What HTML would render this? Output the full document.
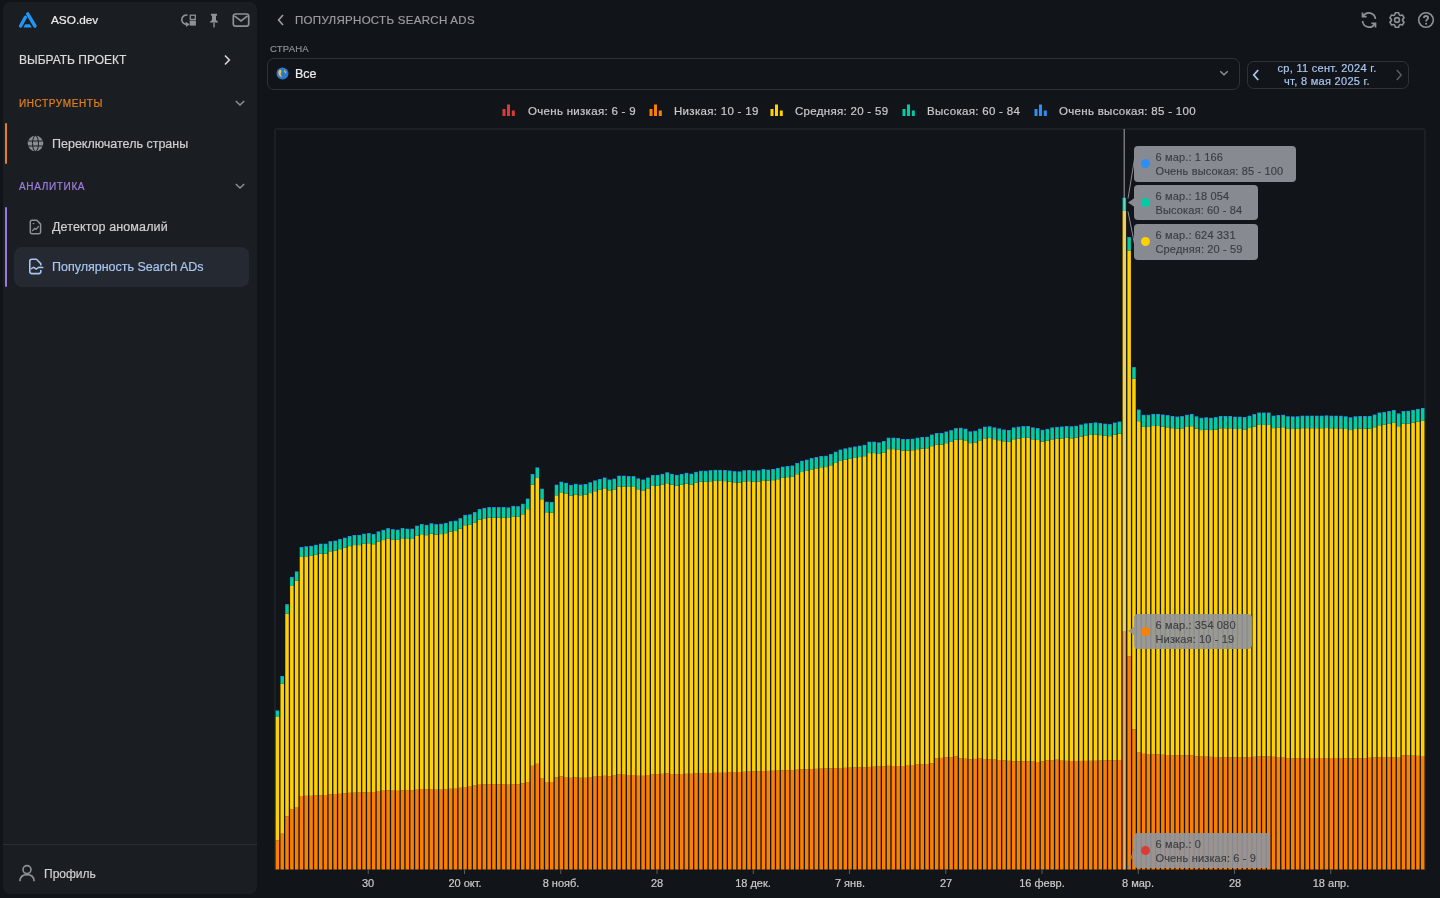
<!DOCTYPE html>
<html lang="ru">
<head>
<meta charset="utf-8">
<style>
*{box-sizing:border-box;margin:0;padding:0}
html,body{width:1440px;height:898px;overflow:hidden;background:#111418;font-family:"Liberation Sans",sans-serif;color:#d6d7d9}
.abs{position:absolute}
#side{position:absolute;left:3px;top:2px;width:254px;height:891.5px;background:#1a1d21;border-radius:7px}
.t{position:absolute;white-space:nowrap;line-height:1;will-change:transform;-webkit-text-stroke:0.2px currentColor}
.accent{position:absolute;left:5px;width:2px;border-radius:1px}
.sel{position:absolute;left:13.5px;top:246.5px;width:235px;height:40px;background:#242932;border-radius:8px}
#chartbox{position:absolute;left:274px;top:128px;width:1152px;height:742px;border:2px solid #1c1f24;border-radius:3px 3px 0 0;border-bottom:none}
.xl{will-change:transform;-webkit-text-stroke:0.2px currentColor;position:absolute;top:877px;width:80px;text-align:center;font-size:11px;color:#c9cacc;line-height:12px}
.tt{will-change:transform;position:absolute;background:rgba(146,149,156,0.92);border-radius:4px}
.tt .dot{position:absolute;left:7px;top:13px;width:9px;height:9px;border-radius:50%}
.tt .l1,.tt .l2{-webkit-text-stroke:0.15px currentColor;position:absolute;left:21.5px;font-size:11px;letter-spacing:0.15px;color:#3b3e44;white-space:nowrap;line-height:12px}
.tt .l1{top:5.4px}
.tt .l2{top:18.5px}
.li{position:absolute;top:104px}
.lt{will-change:transform;-webkit-text-stroke:0.2px currentColor;position:absolute;top:105px;font-size:11.5px;letter-spacing:0.3px;color:#c9cacc;white-space:nowrap;line-height:12px}
</style>
</head>
<body>
<div id="side">
</div>
<!-- logo -->
<svg class="abs" style="left:16px;top:10px" width="24" height="20" viewBox="16 10 24 20">
  <path d="M27.7 13.9 L35.0 26.0" stroke="#2196f3" stroke-width="3.4" stroke-linecap="round"/>
  <path d="M25.4 17.2 L20.6 26.0" stroke="#2196f3" stroke-width="3.4" stroke-linecap="round"/>
  <path d="M23.4 27.6 L25.2 24.2 L29.8 24.2 L31.8 27.6 Z" fill="#2196f3"/>
</svg>
<div class="t" style="left:50.5px;top:15px;font-size:11.8px;color:#eceef0">ASO.dev</div>
<!-- top icons -->
<svg class="abs" style="left:181px;top:12px" width="16" height="16" viewBox="0 0 16 16">
  <path d="M6.5 3.2 A4.6 4.6 0 1 0 6.2 12.2" fill="none" stroke="#8e9197" stroke-width="1.6"/>
  <path d="M4.6 10.6 L7.4 12.4 L5 14.2" fill="none" stroke="#8e9197" stroke-width="1.5"/>
  <rect x="9.3" y="3.2" width="5" height="4.2" fill="none" stroke="#8e9197" stroke-width="1.3"/>
  <rect x="8.7" y="8.6" width="6.2" height="5" fill="#8e9197"/>
</svg>
<svg class="abs" style="left:206px;top:12px" width="16" height="16" viewBox="0 0 16 16">
  <path d="M5 1.8 H11 V3.6 L10 4 V8 L12 9.8 V10.6 H4 V9.8 L6 8 V4 L5 3.6 Z" fill="#8e9197"/>
  <rect x="7.3" y="10.4" width="1.4" height="5" fill="#8e9197"/>
</svg>
<svg class="abs" style="left:232px;top:12px" width="18" height="16" viewBox="0 0 18 16">
  <rect x="1.3" y="2" width="15.4" height="12.2" rx="2.2" fill="none" stroke="#8e9197" stroke-width="1.7"/>
  <path d="M2.4 3.8 L9 9 L15.6 3.8" fill="none" stroke="#8e9197" stroke-width="1.7"/>
</svg>

<div class="t" style="left:18.5px;top:54px;font-size:12px;color:#d9dadc;font-weight:500">ВЫБРАТЬ ПРОЕКТ</div>
<svg class="abs" style="left:222px;top:54px" width="10" height="12" viewBox="0 0 10 12">
  <path d="M3 1.5 L7.3 6 L3 10.5" fill="none" stroke="#d0d1d3" stroke-width="1.7"/>
</svg>

<div class="t" style="left:18.5px;top:99px;font-size:10px;color:#e5821e;font-weight:normal;-webkit-text-stroke:0.2px currentColor;letter-spacing:0.6px">ИНСТРУМЕНТЫ</div>
<svg class="abs" style="left:234px;top:98px" width="12" height="10" viewBox="0 0 12 10">
  <path d="M1.8 3 L6 7 L10.2 3" fill="none" stroke="#8e9197" stroke-width="1.5"/>
</svg>
<div class="accent" style="top:122.5px;height:41px;background:#e5821e"></div>
<svg class="abs" style="left:26.7px;top:134.8px" width="17" height="17" viewBox="0 0 17 17">
  <circle cx="8.5" cy="8.5" r="7.8" fill="#8a8d92"/>
  <g stroke="#1a1d21" stroke-width="1" fill="none">
  <ellipse cx="8.5" cy="8.5" rx="3" ry="7.8"/>
  <line x1="0.7" y1="6" x2="16.3" y2="6"/>
  <line x1="0.7" y1="11" x2="16.3" y2="11"/>
  </g>
</svg>
<div class="t" style="left:52px;top:137.5px;font-size:12.5px;color:#cfd0d3">Переключатель страны</div>

<div class="t" style="left:18.5px;top:182.2px;font-size:10px;color:#a07ee0;font-weight:normal;-webkit-text-stroke:0.2px currentColor;letter-spacing:0.65px">АНАЛИТИКА</div>
<svg class="abs" style="left:234px;top:181px" width="12" height="10" viewBox="0 0 12 10">
  <path d="M1.8 3 L6 7 L10.2 3" fill="none" stroke="#8e9197" stroke-width="1.5"/>
</svg>
<div class="accent" style="top:206.5px;height:80px;background:#9a7ad8"></div>
<svg class="abs" style="left:28px;top:219px" width="15" height="16" viewBox="0 0 15 16">
  <path d="M4 1.3 H8.8 L12.6 5.1 V13 Q12.6 14.7 10.9 14.7 H4 Q2.3 14.7 2.3 13 V3 Q2.3 1.3 4 1.3 Z" fill="none" stroke="#8e9197" stroke-width="1.5" stroke-linejoin="round"/>
  <path d="M4.6 11.6 L6.6 9.4 L8 10.4 L10.4 7.6" fill="none" stroke="#8e9197" stroke-width="1.4" stroke-linecap="round"/>
  <path d="M4.6 4.6 H6.4" stroke="#8e9197" stroke-width="1.1"/>
</svg>
<div class="t" style="left:52px;top:221px;font-size:12.5px;letter-spacing:0.12px;color:#cfd0d3">Детектор аномалий</div>

<div class="sel"></div>
<svg class="abs" style="left:28px;top:258px" width="17" height="17" viewBox="0 0 17 17">
  <path d="M12.8 12 V13.6 Q12.8 15.6 10.8 15.6 H3.8 Q1.8 15.6 1.8 13.6 V3.2 Q1.8 1.2 3.8 1.2 H8.4 L12.8 5.6 V7.6" fill="none" stroke="#a9c6ef" stroke-width="1.6" stroke-linejoin="round"/>
  <path d="M3.4 10.6 L5.6 9.4 L8.2 11 L10.8 9.2 L14.8 9.6" fill="none" stroke="#a9c6ef" stroke-width="1.5" stroke-linecap="round"/>
</svg>
<div class="t" style="left:52px;top:261px;font-size:12.5px;color:#a9c6ef">Популярность Search ADs</div>

<div class="abs" style="left:3px;top:844px;width:254px;height:1px;background:#2b2e35"></div>
<svg class="abs" style="left:18px;top:864px" width="18" height="18" viewBox="0 0 18 18">
  <circle cx="9" cy="5.6" r="4" fill="none" stroke="#8e9197" stroke-width="1.6"/>
  <path d="M1.8 17.2 C2.2 12.6 5 10.6 9 10.6 C13 10.6 15.8 12.6 16.2 17.2" fill="none" stroke="#8e9197" stroke-width="1.6"/>
</svg>
<div class="t" style="left:44px;top:867.8px;font-size:12px;color:#cfd0d2">Профиль</div>

<!-- header -->
<svg class="abs" style="left:275px;top:13px" width="12" height="14" viewBox="0 0 12 14">
  <path d="M8 2 L3.6 7 L8 12" fill="none" stroke="#9a9ca1" stroke-width="1.7"/>
</svg>
<div class="t" style="left:295px;top:15px;font-size:11.5px;letter-spacing:0.3px;color:#9a9ca1">ПОПУЛЯРНОСТЬ SEARCH ADS</div>

<svg class="abs" style="left:1359px;top:10px;transform:scaleX(-1)" width="20" height="20" viewBox="0 0 20 20">
  <path d="M3.6 9 A6.6 6.6 0 0 1 15.8 6" fill="none" stroke="#8e9197" stroke-width="1.7"/>
  <path d="M16.4 11 A6.6 6.6 0 0 1 4.2 14" fill="none" stroke="#8e9197" stroke-width="1.7"/>
  <path d="M16.5 2.5 V6.6 H12.4" fill="none" stroke="#8e9197" stroke-width="1.7"/>
  <path d="M3.5 17.5 V13.4 H7.6" fill="none" stroke="#8e9197" stroke-width="1.7"/>
</svg>
<svg class="abs" style="left:1388px;top:11px" width="18" height="18" viewBox="0 0 18 18">
  <path d="M6.72 3.88 L7.34 1.79 L10.66 1.79 L11.28 3.88 L12.29 4.47 L14.41 3.95 L16.08 6.84 L14.57 8.41 L14.57 9.59 L16.08 11.16 L14.41 14.05 L12.29 13.53 L11.28 14.12 L10.66 16.21 L7.34 16.21 L6.72 14.12 L5.71 13.53 L3.59 14.05 L1.92 11.16 L3.43 9.59 L3.43 8.41 L1.92 6.84 L3.59 3.95 L5.71 4.47 Z" fill="none" stroke="#8e9197" stroke-width="1.6" stroke-linejoin="round"/>
  <circle cx="9" cy="9" r="2.4" fill="none" stroke="#8e9197" stroke-width="1.6"/>
</svg>
<svg class="abs" style="left:1417px;top:11px" width="18" height="18" viewBox="0 0 18 18">
  <circle cx="9" cy="9" r="7.3" fill="none" stroke="#8e9197" stroke-width="1.6"/>
  <path d="M6.9 7.1 C6.9 5.7 7.8 5 9 5 C10.3 5 11.1 5.8 11.1 6.9 C11.1 8.4 9.1 8.5 9.1 10.4" fill="none" stroke="#8e9197" stroke-width="1.8"/>
  <rect x="8.2" y="11.9" width="1.8" height="1.7" fill="#8e9197"/>
</svg>

<div class="t" style="left:270px;top:44px;font-size:9.5px;color:#8d9096;letter-spacing:0.2px">СТРАНА</div>
<div class="abs" style="left:266.5px;top:58px;width:973px;height:31.5px;border:1px solid #2f3237;border-radius:7px"></div>
<svg class="abs" style="left:276px;top:67px" width="13" height="13" viewBox="0 0 13 13">
  <circle cx="6.5" cy="6.5" r="6" fill="#2e79c9"/>
  <path d="M4 2.5 C5.5 3 6 4.5 5 6 C4.2 7 5 8.5 6 9.5 C5 10.5 3 9 2.5 7 C2 5 2.8 3.3 4 2.5 Z" fill="#e0c25a"/>
  <path d="M8 3 C9.5 3.5 10.5 5 10 6.5 C9 6 8 5 8 3 Z" fill="#e0c25a"/>
</svg>
<div class="t" style="left:295px;top:67.5px;font-size:12.5px;color:#eceef0;font-weight:500">Все</div>
<svg class="abs" style="left:1218px;top:68px" width="12" height="10" viewBox="0 0 12 10">
  <path d="M2.2 3.2 L6 6.8 L9.8 3.2" fill="none" stroke="#8e9197" stroke-width="1.4"/>
</svg>

<div class="abs" style="left:1247px;top:61px;width:161.5px;height:28px;border:1px solid #2f3237;border-radius:7px"></div>
<svg class="abs" style="left:1250px;top:67px" width="12" height="16" viewBox="0 0 12 16">
  <path d="M8.2 3 L3.8 8 L8.2 13" fill="none" stroke="#a9c6ef" stroke-width="1.8"/>
</svg>
<svg class="abs" style="left:1393px;top:67px" width="12" height="16" viewBox="0 0 12 16">
  <path d="M3.8 3 L8.2 8 L3.8 13" fill="none" stroke="#5d6066" stroke-width="1.4"/>
</svg>
<div class="t" style="left:1262px;top:63px;width:130px;text-align:center;font-size:11px;letter-spacing:0.3px;color:#a9c6ef;font-weight:500">ср, 11 сент. 2024 г.</div>
<div class="t" style="left:1262px;top:76px;width:130px;text-align:center;font-size:11px;letter-spacing:0.3px;color:#a9c6ef;font-weight:500">чт, 8 мая 2025 г.</div>

<svg class="li" style="left:502px" width="14" height="13" viewBox="0 0 14 13"><rect x="0.5" y="5" width="3" height="7" fill="#dc3b35"/><rect x="5" y="0.5" width="3" height="11.5" fill="#dc3b35"/><rect x="9.8" y="6.5" width="3" height="5.5" fill="#dc3b35"/></svg><div class="lt" style="left:527.75px">Очень низкая: 6 - 9</div>
<svg class="li" style="left:649px" width="14" height="13" viewBox="0 0 14 13"><rect x="0.5" y="5" width="3" height="7" fill="#fb8000"/><rect x="5" y="0.5" width="3" height="11.5" fill="#fb8000"/><rect x="9.8" y="6.5" width="3" height="5.5" fill="#fb8000"/></svg><div class="lt" style="left:674.4px">Низкая: 10 - 19</div>
<svg class="li" style="left:769.5px" width="14" height="13" viewBox="0 0 14 13"><rect x="0.5" y="5" width="3" height="7" fill="#ffd100"/><rect x="5" y="0.5" width="3" height="11.5" fill="#ffd100"/><rect x="9.8" y="6.5" width="3" height="5.5" fill="#ffd100"/></svg><div class="lt" style="left:795px">Средняя: 20 - 59</div>
<svg class="li" style="left:901.5px" width="14" height="13" viewBox="0 0 14 13"><rect x="0.5" y="5" width="3" height="7" fill="#00cca6"/><rect x="5" y="0.5" width="3" height="11.5" fill="#00cca6"/><rect x="9.8" y="6.5" width="3" height="5.5" fill="#00cca6"/></svg><div class="lt" style="left:926.9px">Высокая: 60 - 84</div>
<svg class="li" style="left:1033.5px" width="14" height="13" viewBox="0 0 14 13"><rect x="0.5" y="5" width="3" height="7" fill="#2d8ff5"/><rect x="5" y="0.5" width="3" height="11.5" fill="#2d8ff5"/><rect x="9.8" y="6.5" width="3" height="5.5" fill="#2d8ff5"/></svg><div class="lt" style="left:1059px">Очень высокая: 85 - 100</div>

<div id="chartbox"></div>
<svg class="abs" style="left:0;top:0" width="1440" height="898" viewBox="0 0 1440 898">
<rect x="275.65" y="840.30" width="3.5" height="29.20" fill="#fb8000"/>
<rect x="275.65" y="717.00" width="3.5" height="123.30" fill="#ffd100"/>
<rect x="275.65" y="710.80" width="3.5" height="6.20" fill="#00cca6"/>
<rect x="275.65" y="710.50" width="3.5" height="0.9" fill="#2d8ff5"/>
<rect x="280.46" y="833.70" width="3.5" height="35.80" fill="#fb8000"/>
<rect x="280.46" y="683.60" width="3.5" height="150.10" fill="#ffd100"/>
<rect x="280.46" y="676.30" width="3.5" height="7.30" fill="#00cca6"/>
<rect x="280.46" y="676.00" width="3.5" height="0.9" fill="#2d8ff5"/>
<rect x="285.27" y="816.30" width="3.5" height="53.20" fill="#fb8000"/>
<rect x="285.27" y="613.50" width="3.5" height="202.80" fill="#ffd100"/>
<rect x="285.27" y="604.60" width="3.5" height="8.90" fill="#00cca6"/>
<rect x="285.27" y="604.30" width="3.5" height="0.9" fill="#2d8ff5"/>
<rect x="290.09" y="809.50" width="3.5" height="60.00" fill="#fb8000"/>
<rect x="290.09" y="586.00" width="3.5" height="223.50" fill="#ffd100"/>
<rect x="290.09" y="577.20" width="3.5" height="8.80" fill="#00cca6"/>
<rect x="290.09" y="576.90" width="3.5" height="0.9" fill="#2d8ff5"/>
<rect x="294.90" y="807.00" width="3.5" height="62.50" fill="#fb8000"/>
<rect x="294.90" y="580.80" width="3.5" height="226.20" fill="#ffd100"/>
<rect x="294.90" y="571.80" width="3.5" height="9.00" fill="#00cca6"/>
<rect x="294.90" y="571.50" width="3.5" height="0.9" fill="#2d8ff5"/>
<rect x="299.71" y="796.00" width="3.5" height="73.50" fill="#fb8000"/>
<rect x="299.71" y="556.96" width="3.5" height="239.04" fill="#ffd100"/>
<rect x="299.71" y="547.30" width="3.5" height="9.66" fill="#00cca6"/>
<rect x="299.71" y="547.00" width="3.5" height="0.9" fill="#2d8ff5"/>
<rect x="304.52" y="795.80" width="3.5" height="73.70" fill="#fb8000"/>
<rect x="304.52" y="556.37" width="3.5" height="239.43" fill="#ffd100"/>
<rect x="304.52" y="546.70" width="3.5" height="9.67" fill="#00cca6"/>
<rect x="304.52" y="546.40" width="3.5" height="0.9" fill="#2d8ff5"/>
<rect x="309.34" y="795.80" width="3.5" height="73.70" fill="#fb8000"/>
<rect x="309.34" y="555.89" width="3.5" height="239.91" fill="#ffd100"/>
<rect x="309.34" y="546.20" width="3.5" height="9.69" fill="#00cca6"/>
<rect x="309.34" y="545.90" width="3.5" height="0.9" fill="#2d8ff5"/>
<rect x="314.15" y="795.50" width="3.5" height="74.00" fill="#fb8000"/>
<rect x="314.15" y="554.80" width="3.5" height="240.70" fill="#ffd100"/>
<rect x="314.15" y="545.10" width="3.5" height="9.70" fill="#00cca6"/>
<rect x="314.15" y="544.80" width="3.5" height="0.9" fill="#2d8ff5"/>
<rect x="318.96" y="795.20" width="3.5" height="74.30" fill="#fb8000"/>
<rect x="318.96" y="553.71" width="3.5" height="241.49" fill="#ffd100"/>
<rect x="318.96" y="544.00" width="3.5" height="9.71" fill="#00cca6"/>
<rect x="318.96" y="543.70" width="3.5" height="0.9" fill="#2d8ff5"/>
<rect x="323.77" y="795.00" width="3.5" height="74.50" fill="#fb8000"/>
<rect x="323.77" y="553.72" width="3.5" height="241.28" fill="#ffd100"/>
<rect x="323.77" y="544.00" width="3.5" height="9.72" fill="#00cca6"/>
<rect x="323.77" y="543.70" width="3.5" height="0.9" fill="#2d8ff5"/>
<rect x="328.58" y="794.30" width="3.5" height="75.20" fill="#fb8000"/>
<rect x="328.58" y="551.33" width="3.5" height="242.97" fill="#ffd100"/>
<rect x="328.58" y="541.60" width="3.5" height="9.73" fill="#00cca6"/>
<rect x="328.58" y="541.30" width="3.5" height="0.9" fill="#2d8ff5"/>
<rect x="333.40" y="794.00" width="3.5" height="75.50" fill="#fb8000"/>
<rect x="333.40" y="550.75" width="3.5" height="243.25" fill="#ffd100"/>
<rect x="333.40" y="541.00" width="3.5" height="9.75" fill="#00cca6"/>
<rect x="333.40" y="540.70" width="3.5" height="0.9" fill="#2d8ff5"/>
<rect x="338.21" y="793.80" width="3.5" height="75.70" fill="#fb8000"/>
<rect x="338.21" y="549.16" width="3.5" height="244.64" fill="#ffd100"/>
<rect x="338.21" y="539.40" width="3.5" height="9.76" fill="#00cca6"/>
<rect x="338.21" y="539.10" width="3.5" height="0.9" fill="#2d8ff5"/>
<rect x="343.02" y="793.30" width="3.5" height="76.20" fill="#fb8000"/>
<rect x="343.02" y="547.77" width="3.5" height="245.53" fill="#ffd100"/>
<rect x="343.02" y="538.00" width="3.5" height="9.77" fill="#00cca6"/>
<rect x="343.02" y="537.70" width="3.5" height="0.9" fill="#2d8ff5"/>
<rect x="347.83" y="792.80" width="3.5" height="76.70" fill="#fb8000"/>
<rect x="347.83" y="546.18" width="3.5" height="246.62" fill="#ffd100"/>
<rect x="347.83" y="536.40" width="3.5" height="9.78" fill="#00cca6"/>
<rect x="347.83" y="536.10" width="3.5" height="0.9" fill="#2d8ff5"/>
<rect x="352.64" y="792.70" width="3.5" height="76.80" fill="#fb8000"/>
<rect x="352.64" y="545.09" width="3.5" height="247.61" fill="#ffd100"/>
<rect x="352.64" y="535.30" width="3.5" height="9.79" fill="#00cca6"/>
<rect x="352.64" y="535.00" width="3.5" height="0.9" fill="#2d8ff5"/>
<rect x="357.46" y="792.50" width="3.5" height="77.00" fill="#fb8000"/>
<rect x="357.46" y="545.11" width="3.5" height="247.39" fill="#ffd100"/>
<rect x="357.46" y="535.30" width="3.5" height="9.81" fill="#00cca6"/>
<rect x="357.46" y="535.00" width="3.5" height="0.9" fill="#2d8ff5"/>
<rect x="362.27" y="792.30" width="3.5" height="77.20" fill="#fb8000"/>
<rect x="362.27" y="543.82" width="3.5" height="248.48" fill="#ffd100"/>
<rect x="362.27" y="534.00" width="3.5" height="9.82" fill="#00cca6"/>
<rect x="362.27" y="533.70" width="3.5" height="0.9" fill="#2d8ff5"/>
<rect x="367.08" y="792.00" width="3.5" height="77.50" fill="#fb8000"/>
<rect x="367.08" y="543.23" width="3.5" height="248.77" fill="#ffd100"/>
<rect x="367.08" y="533.40" width="3.5" height="9.83" fill="#00cca6"/>
<rect x="367.08" y="533.10" width="3.5" height="0.9" fill="#2d8ff5"/>
<rect x="371.89" y="792.00" width="3.5" height="77.50" fill="#fb8000"/>
<rect x="371.89" y="544.24" width="3.5" height="247.76" fill="#ffd100"/>
<rect x="371.89" y="534.40" width="3.5" height="9.84" fill="#00cca6"/>
<rect x="371.89" y="534.10" width="3.5" height="0.9" fill="#2d8ff5"/>
<rect x="376.71" y="791.00" width="3.5" height="78.50" fill="#fb8000"/>
<rect x="376.71" y="541.66" width="3.5" height="249.34" fill="#ffd100"/>
<rect x="376.71" y="531.80" width="3.5" height="9.86" fill="#00cca6"/>
<rect x="376.71" y="531.50" width="3.5" height="0.9" fill="#2d8ff5"/>
<rect x="381.52" y="790.70" width="3.5" height="78.80" fill="#fb8000"/>
<rect x="381.52" y="540.07" width="3.5" height="250.63" fill="#ffd100"/>
<rect x="381.52" y="530.20" width="3.5" height="9.87" fill="#00cca6"/>
<rect x="381.52" y="529.90" width="3.5" height="0.9" fill="#2d8ff5"/>
<rect x="386.33" y="790.30" width="3.5" height="79.20" fill="#fb8000"/>
<rect x="386.33" y="538.48" width="3.5" height="251.82" fill="#ffd100"/>
<rect x="386.33" y="528.60" width="3.5" height="9.88" fill="#00cca6"/>
<rect x="386.33" y="528.30" width="3.5" height="0.9" fill="#2d8ff5"/>
<rect x="391.14" y="790.70" width="3.5" height="78.80" fill="#fb8000"/>
<rect x="391.14" y="539.49" width="3.5" height="251.21" fill="#ffd100"/>
<rect x="391.14" y="529.60" width="3.5" height="9.89" fill="#00cca6"/>
<rect x="391.14" y="529.30" width="3.5" height="0.9" fill="#2d8ff5"/>
<rect x="395.95" y="790.80" width="3.5" height="78.70" fill="#fb8000"/>
<rect x="395.95" y="539.90" width="3.5" height="250.90" fill="#ffd100"/>
<rect x="395.95" y="530.00" width="3.5" height="9.90" fill="#00cca6"/>
<rect x="395.95" y="529.70" width="3.5" height="0.9" fill="#2d8ff5"/>
<rect x="400.77" y="790.30" width="3.5" height="79.20" fill="#fb8000"/>
<rect x="400.77" y="538.32" width="3.5" height="251.98" fill="#ffd100"/>
<rect x="400.77" y="528.40" width="3.5" height="9.92" fill="#00cca6"/>
<rect x="400.77" y="528.10" width="3.5" height="0.9" fill="#2d8ff5"/>
<rect x="405.58" y="790.50" width="3.5" height="79.00" fill="#fb8000"/>
<rect x="405.58" y="538.93" width="3.5" height="251.57" fill="#ffd100"/>
<rect x="405.58" y="529.00" width="3.5" height="9.93" fill="#00cca6"/>
<rect x="405.58" y="528.70" width="3.5" height="0.9" fill="#2d8ff5"/>
<rect x="410.39" y="790.50" width="3.5" height="79.00" fill="#fb8000"/>
<rect x="410.39" y="538.94" width="3.5" height="251.56" fill="#ffd100"/>
<rect x="410.39" y="529.00" width="3.5" height="9.94" fill="#00cca6"/>
<rect x="410.39" y="528.70" width="3.5" height="0.9" fill="#2d8ff5"/>
<rect x="415.20" y="789.70" width="3.5" height="79.80" fill="#fb8000"/>
<rect x="415.20" y="535.95" width="3.5" height="253.75" fill="#ffd100"/>
<rect x="415.20" y="526.00" width="3.5" height="9.95" fill="#00cca6"/>
<rect x="415.20" y="525.70" width="3.5" height="0.9" fill="#2d8ff5"/>
<rect x="420.02" y="789.00" width="3.5" height="80.50" fill="#fb8000"/>
<rect x="420.02" y="534.27" width="3.5" height="254.73" fill="#ffd100"/>
<rect x="420.02" y="524.30" width="3.5" height="9.97" fill="#00cca6"/>
<rect x="420.02" y="524.00" width="3.5" height="0.9" fill="#2d8ff5"/>
<rect x="424.83" y="789.20" width="3.5" height="80.30" fill="#fb8000"/>
<rect x="424.83" y="535.18" width="3.5" height="254.02" fill="#ffd100"/>
<rect x="424.83" y="525.20" width="3.5" height="9.98" fill="#00cca6"/>
<rect x="424.83" y="524.90" width="3.5" height="0.9" fill="#2d8ff5"/>
<rect x="429.64" y="789.00" width="3.5" height="80.50" fill="#fb8000"/>
<rect x="429.64" y="533.69" width="3.5" height="255.31" fill="#ffd100"/>
<rect x="429.64" y="523.70" width="3.5" height="9.99" fill="#00cca6"/>
<rect x="429.64" y="523.40" width="3.5" height="0.9" fill="#2d8ff5"/>
<rect x="434.45" y="789.70" width="3.5" height="79.80" fill="#fb8000"/>
<rect x="434.45" y="534.60" width="3.5" height="255.10" fill="#ffd100"/>
<rect x="434.45" y="524.60" width="3.5" height="10.00" fill="#00cca6"/>
<rect x="434.45" y="524.30" width="3.5" height="0.9" fill="#2d8ff5"/>
<rect x="439.26" y="789.70" width="3.5" height="79.80" fill="#fb8000"/>
<rect x="439.26" y="534.11" width="3.5" height="255.59" fill="#ffd100"/>
<rect x="439.26" y="524.10" width="3.5" height="10.01" fill="#00cca6"/>
<rect x="439.26" y="523.80" width="3.5" height="0.9" fill="#2d8ff5"/>
<rect x="444.08" y="789.50" width="3.5" height="80.00" fill="#fb8000"/>
<rect x="444.08" y="533.23" width="3.5" height="256.27" fill="#ffd100"/>
<rect x="444.08" y="523.20" width="3.5" height="10.03" fill="#00cca6"/>
<rect x="444.08" y="522.90" width="3.5" height="0.9" fill="#2d8ff5"/>
<rect x="448.89" y="788.80" width="3.5" height="80.70" fill="#fb8000"/>
<rect x="448.89" y="531.64" width="3.5" height="257.16" fill="#ffd100"/>
<rect x="448.89" y="521.60" width="3.5" height="10.04" fill="#00cca6"/>
<rect x="448.89" y="521.30" width="3.5" height="0.9" fill="#2d8ff5"/>
<rect x="453.70" y="788.70" width="3.5" height="80.80" fill="#fb8000"/>
<rect x="453.70" y="531.05" width="3.5" height="257.65" fill="#ffd100"/>
<rect x="453.70" y="521.00" width="3.5" height="10.05" fill="#00cca6"/>
<rect x="453.70" y="520.70" width="3.5" height="0.9" fill="#2d8ff5"/>
<rect x="458.51" y="787.80" width="3.5" height="81.70" fill="#fb8000"/>
<rect x="458.51" y="528.66" width="3.5" height="259.14" fill="#ffd100"/>
<rect x="458.51" y="518.60" width="3.5" height="10.06" fill="#00cca6"/>
<rect x="458.51" y="518.30" width="3.5" height="0.9" fill="#2d8ff5"/>
<rect x="463.33" y="787.00" width="3.5" height="82.50" fill="#fb8000"/>
<rect x="463.33" y="525.28" width="3.5" height="261.72" fill="#ffd100"/>
<rect x="463.33" y="515.20" width="3.5" height="10.08" fill="#00cca6"/>
<rect x="463.33" y="514.90" width="3.5" height="0.9" fill="#2d8ff5"/>
<rect x="468.14" y="786.70" width="3.5" height="82.80" fill="#fb8000"/>
<rect x="468.14" y="524.89" width="3.5" height="261.81" fill="#ffd100"/>
<rect x="468.14" y="514.80" width="3.5" height="10.09" fill="#00cca6"/>
<rect x="468.14" y="514.50" width="3.5" height="0.9" fill="#2d8ff5"/>
<rect x="472.95" y="785.50" width="3.5" height="84.00" fill="#fb8000"/>
<rect x="472.95" y="522.60" width="3.5" height="262.90" fill="#ffd100"/>
<rect x="472.95" y="512.50" width="3.5" height="10.10" fill="#00cca6"/>
<rect x="472.95" y="512.20" width="3.5" height="0.9" fill="#2d8ff5"/>
<rect x="477.76" y="784.70" width="3.5" height="84.80" fill="#fb8000"/>
<rect x="477.76" y="519.61" width="3.5" height="265.09" fill="#ffd100"/>
<rect x="477.76" y="509.50" width="3.5" height="10.11" fill="#00cca6"/>
<rect x="477.76" y="509.20" width="3.5" height="0.9" fill="#2d8ff5"/>
<rect x="482.57" y="784.20" width="3.5" height="85.30" fill="#fb8000"/>
<rect x="482.57" y="518.32" width="3.5" height="265.88" fill="#ffd100"/>
<rect x="482.57" y="508.20" width="3.5" height="10.12" fill="#00cca6"/>
<rect x="482.57" y="507.90" width="3.5" height="0.9" fill="#2d8ff5"/>
<rect x="487.39" y="784.20" width="3.5" height="85.30" fill="#fb8000"/>
<rect x="487.39" y="517.64" width="3.5" height="266.56" fill="#ffd100"/>
<rect x="487.39" y="507.50" width="3.5" height="10.14" fill="#00cca6"/>
<rect x="487.39" y="507.20" width="3.5" height="0.9" fill="#2d8ff5"/>
<rect x="492.20" y="784.20" width="3.5" height="85.30" fill="#fb8000"/>
<rect x="492.20" y="517.65" width="3.5" height="266.55" fill="#ffd100"/>
<rect x="492.20" y="507.50" width="3.5" height="10.15" fill="#00cca6"/>
<rect x="492.20" y="507.20" width="3.5" height="0.9" fill="#2d8ff5"/>
<rect x="497.01" y="784.20" width="3.5" height="85.30" fill="#fb8000"/>
<rect x="497.01" y="517.66" width="3.5" height="266.54" fill="#ffd100"/>
<rect x="497.01" y="507.50" width="3.5" height="10.16" fill="#00cca6"/>
<rect x="497.01" y="507.20" width="3.5" height="0.9" fill="#2d8ff5"/>
<rect x="501.82" y="784.20" width="3.5" height="85.30" fill="#fb8000"/>
<rect x="501.82" y="517.47" width="3.5" height="266.73" fill="#ffd100"/>
<rect x="501.82" y="507.30" width="3.5" height="10.17" fill="#00cca6"/>
<rect x="501.82" y="507.00" width="3.5" height="0.9" fill="#2d8ff5"/>
<rect x="506.63" y="784.70" width="3.5" height="84.80" fill="#fb8000"/>
<rect x="506.63" y="517.98" width="3.5" height="266.72" fill="#ffd100"/>
<rect x="506.63" y="507.80" width="3.5" height="10.18" fill="#00cca6"/>
<rect x="506.63" y="507.50" width="3.5" height="0.9" fill="#2d8ff5"/>
<rect x="511.45" y="784.20" width="3.5" height="85.30" fill="#fb8000"/>
<rect x="511.45" y="516.40" width="3.5" height="267.80" fill="#ffd100"/>
<rect x="511.45" y="506.20" width="3.5" height="10.20" fill="#00cca6"/>
<rect x="511.45" y="505.90" width="3.5" height="0.9" fill="#2d8ff5"/>
<rect x="516.26" y="784.20" width="3.5" height="85.30" fill="#fb8000"/>
<rect x="516.26" y="516.81" width="3.5" height="267.39" fill="#ffd100"/>
<rect x="516.26" y="506.60" width="3.5" height="10.21" fill="#00cca6"/>
<rect x="516.26" y="506.30" width="3.5" height="0.9" fill="#2d8ff5"/>
<rect x="521.07" y="783.30" width="3.5" height="86.20" fill="#fb8000"/>
<rect x="521.07" y="514.32" width="3.5" height="268.98" fill="#ffd100"/>
<rect x="521.07" y="504.10" width="3.5" height="10.22" fill="#00cca6"/>
<rect x="521.07" y="503.80" width="3.5" height="0.9" fill="#2d8ff5"/>
<rect x="525.88" y="782.00" width="3.5" height="87.50" fill="#fb8000"/>
<rect x="525.88" y="509.13" width="3.5" height="272.87" fill="#ffd100"/>
<rect x="525.88" y="498.90" width="3.5" height="10.23" fill="#00cca6"/>
<rect x="525.88" y="498.60" width="3.5" height="0.9" fill="#2d8ff5"/>
<rect x="530.70" y="765.80" width="3.5" height="103.70" fill="#fb8000"/>
<rect x="530.70" y="484.55" width="3.5" height="281.25" fill="#ffd100"/>
<rect x="530.70" y="474.30" width="3.5" height="10.25" fill="#00cca6"/>
<rect x="530.70" y="474.00" width="3.5" height="0.9" fill="#2d8ff5"/>
<rect x="535.51" y="763.80" width="3.5" height="105.70" fill="#fb8000"/>
<rect x="535.51" y="478.06" width="3.5" height="285.74" fill="#ffd100"/>
<rect x="535.51" y="467.80" width="3.5" height="10.26" fill="#00cca6"/>
<rect x="535.51" y="467.50" width="3.5" height="0.9" fill="#2d8ff5"/>
<rect x="540.32" y="778.00" width="3.5" height="91.50" fill="#fb8000"/>
<rect x="540.32" y="499.27" width="3.5" height="278.73" fill="#ffd100"/>
<rect x="540.32" y="489.00" width="3.5" height="10.27" fill="#00cca6"/>
<rect x="540.32" y="488.70" width="3.5" height="0.9" fill="#2d8ff5"/>
<rect x="545.13" y="782.00" width="3.5" height="87.50" fill="#fb8000"/>
<rect x="545.13" y="512.28" width="3.5" height="269.72" fill="#ffd100"/>
<rect x="545.13" y="502.00" width="3.5" height="10.28" fill="#00cca6"/>
<rect x="545.13" y="501.70" width="3.5" height="0.9" fill="#2d8ff5"/>
<rect x="549.94" y="782.00" width="3.5" height="87.50" fill="#fb8000"/>
<rect x="549.94" y="512.59" width="3.5" height="269.41" fill="#ffd100"/>
<rect x="549.94" y="502.30" width="3.5" height="10.29" fill="#00cca6"/>
<rect x="549.94" y="502.00" width="3.5" height="0.9" fill="#2d8ff5"/>
<rect x="554.76" y="777.30" width="3.5" height="92.20" fill="#fb8000"/>
<rect x="554.76" y="495.31" width="3.5" height="281.99" fill="#ffd100"/>
<rect x="554.76" y="485.00" width="3.5" height="10.31" fill="#00cca6"/>
<rect x="554.76" y="484.70" width="3.5" height="0.9" fill="#2d8ff5"/>
<rect x="559.57" y="776.20" width="3.5" height="93.30" fill="#fb8000"/>
<rect x="559.57" y="492.32" width="3.5" height="283.88" fill="#ffd100"/>
<rect x="559.57" y="482.00" width="3.5" height="10.32" fill="#00cca6"/>
<rect x="559.57" y="481.70" width="3.5" height="0.9" fill="#2d8ff5"/>
<rect x="564.38" y="777.00" width="3.5" height="92.50" fill="#fb8000"/>
<rect x="564.38" y="493.43" width="3.5" height="283.57" fill="#ffd100"/>
<rect x="564.38" y="483.10" width="3.5" height="10.33" fill="#00cca6"/>
<rect x="564.38" y="482.80" width="3.5" height="0.9" fill="#2d8ff5"/>
<rect x="569.19" y="777.80" width="3.5" height="91.70" fill="#fb8000"/>
<rect x="569.19" y="495.54" width="3.5" height="282.26" fill="#ffd100"/>
<rect x="569.19" y="485.20" width="3.5" height="10.34" fill="#00cca6"/>
<rect x="569.19" y="484.90" width="3.5" height="0.9" fill="#2d8ff5"/>
<rect x="574.01" y="777.30" width="3.5" height="92.20" fill="#fb8000"/>
<rect x="574.01" y="494.46" width="3.5" height="282.84" fill="#ffd100"/>
<rect x="574.01" y="484.10" width="3.5" height="10.36" fill="#00cca6"/>
<rect x="574.01" y="483.80" width="3.5" height="0.9" fill="#2d8ff5"/>
<rect x="578.82" y="777.80" width="3.5" height="91.70" fill="#fb8000"/>
<rect x="578.82" y="495.27" width="3.5" height="282.53" fill="#ffd100"/>
<rect x="578.82" y="484.90" width="3.5" height="10.37" fill="#00cca6"/>
<rect x="578.82" y="484.60" width="3.5" height="0.9" fill="#2d8ff5"/>
<rect x="583.63" y="777.80" width="3.5" height="91.70" fill="#fb8000"/>
<rect x="583.63" y="494.68" width="3.5" height="283.12" fill="#ffd100"/>
<rect x="583.63" y="484.30" width="3.5" height="10.38" fill="#00cca6"/>
<rect x="583.63" y="484.00" width="3.5" height="0.9" fill="#2d8ff5"/>
<rect x="588.44" y="777.00" width="3.5" height="92.50" fill="#fb8000"/>
<rect x="588.44" y="493.09" width="3.5" height="283.91" fill="#ffd100"/>
<rect x="588.44" y="482.70" width="3.5" height="10.39" fill="#00cca6"/>
<rect x="588.44" y="482.40" width="3.5" height="0.9" fill="#2d8ff5"/>
<rect x="593.25" y="776.70" width="3.5" height="92.80" fill="#fb8000"/>
<rect x="593.25" y="491.20" width="3.5" height="285.50" fill="#ffd100"/>
<rect x="593.25" y="480.80" width="3.5" height="10.40" fill="#00cca6"/>
<rect x="593.25" y="480.50" width="3.5" height="0.9" fill="#2d8ff5"/>
<rect x="598.07" y="776.20" width="3.5" height="93.30" fill="#fb8000"/>
<rect x="598.07" y="489.72" width="3.5" height="286.48" fill="#ffd100"/>
<rect x="598.07" y="479.30" width="3.5" height="10.42" fill="#00cca6"/>
<rect x="598.07" y="479.00" width="3.5" height="0.9" fill="#2d8ff5"/>
<rect x="602.88" y="775.80" width="3.5" height="93.70" fill="#fb8000"/>
<rect x="602.88" y="488.33" width="3.5" height="287.47" fill="#ffd100"/>
<rect x="602.88" y="477.90" width="3.5" height="10.43" fill="#00cca6"/>
<rect x="602.88" y="477.60" width="3.5" height="0.9" fill="#2d8ff5"/>
<rect x="607.69" y="776.20" width="3.5" height="93.30" fill="#fb8000"/>
<rect x="607.69" y="490.34" width="3.5" height="285.86" fill="#ffd100"/>
<rect x="607.69" y="479.90" width="3.5" height="10.44" fill="#00cca6"/>
<rect x="607.69" y="479.60" width="3.5" height="0.9" fill="#2d8ff5"/>
<rect x="612.50" y="775.50" width="3.5" height="94.00" fill="#fb8000"/>
<rect x="612.50" y="489.45" width="3.5" height="286.05" fill="#ffd100"/>
<rect x="612.50" y="479.00" width="3.5" height="10.45" fill="#00cca6"/>
<rect x="612.50" y="478.70" width="3.5" height="0.9" fill="#2d8ff5"/>
<rect x="617.32" y="774.30" width="3.5" height="95.20" fill="#fb8000"/>
<rect x="617.32" y="486.47" width="3.5" height="287.83" fill="#ffd100"/>
<rect x="617.32" y="476.00" width="3.5" height="10.47" fill="#00cca6"/>
<rect x="617.32" y="475.70" width="3.5" height="0.9" fill="#2d8ff5"/>
<rect x="622.13" y="774.70" width="3.5" height="94.80" fill="#fb8000"/>
<rect x="622.13" y="486.48" width="3.5" height="288.22" fill="#ffd100"/>
<rect x="622.13" y="476.00" width="3.5" height="10.48" fill="#00cca6"/>
<rect x="622.13" y="475.70" width="3.5" height="0.9" fill="#2d8ff5"/>
<rect x="626.94" y="775.00" width="3.5" height="94.50" fill="#fb8000"/>
<rect x="626.94" y="486.99" width="3.5" height="288.01" fill="#ffd100"/>
<rect x="626.94" y="476.50" width="3.5" height="10.49" fill="#00cca6"/>
<rect x="626.94" y="476.20" width="3.5" height="0.9" fill="#2d8ff5"/>
<rect x="631.75" y="775.00" width="3.5" height="94.50" fill="#fb8000"/>
<rect x="631.75" y="487.00" width="3.5" height="288.00" fill="#ffd100"/>
<rect x="631.75" y="476.50" width="3.5" height="10.50" fill="#00cca6"/>
<rect x="631.75" y="476.20" width="3.5" height="0.9" fill="#2d8ff5"/>
<rect x="636.56" y="775.80" width="3.5" height="93.70" fill="#fb8000"/>
<rect x="636.56" y="489.31" width="3.5" height="286.49" fill="#ffd100"/>
<rect x="636.56" y="478.80" width="3.5" height="10.51" fill="#00cca6"/>
<rect x="636.56" y="478.50" width="3.5" height="0.9" fill="#2d8ff5"/>
<rect x="641.38" y="775.80" width="3.5" height="93.70" fill="#fb8000"/>
<rect x="641.38" y="490.43" width="3.5" height="285.37" fill="#ffd100"/>
<rect x="641.38" y="479.90" width="3.5" height="10.53" fill="#00cca6"/>
<rect x="641.38" y="479.60" width="3.5" height="0.9" fill="#2d8ff5"/>
<rect x="646.19" y="775.00" width="3.5" height="94.50" fill="#fb8000"/>
<rect x="646.19" y="488.44" width="3.5" height="286.56" fill="#ffd100"/>
<rect x="646.19" y="477.90" width="3.5" height="10.54" fill="#00cca6"/>
<rect x="646.19" y="477.60" width="3.5" height="0.9" fill="#2d8ff5"/>
<rect x="651.00" y="774.20" width="3.5" height="95.30" fill="#fb8000"/>
<rect x="651.00" y="485.95" width="3.5" height="288.25" fill="#ffd100"/>
<rect x="651.00" y="475.40" width="3.5" height="10.55" fill="#00cca6"/>
<rect x="651.00" y="475.10" width="3.5" height="0.9" fill="#2d8ff5"/>
<rect x="655.81" y="774.20" width="3.5" height="95.30" fill="#fb8000"/>
<rect x="655.81" y="485.76" width="3.5" height="288.44" fill="#ffd100"/>
<rect x="655.81" y="475.20" width="3.5" height="10.56" fill="#00cca6"/>
<rect x="655.81" y="474.90" width="3.5" height="0.9" fill="#2d8ff5"/>
<rect x="660.62" y="773.80" width="3.5" height="95.70" fill="#fb8000"/>
<rect x="660.62" y="484.77" width="3.5" height="289.03" fill="#ffd100"/>
<rect x="660.62" y="474.20" width="3.5" height="10.57" fill="#00cca6"/>
<rect x="660.62" y="473.90" width="3.5" height="0.9" fill="#2d8ff5"/>
<rect x="665.44" y="773.20" width="3.5" height="96.30" fill="#fb8000"/>
<rect x="665.44" y="483.29" width="3.5" height="289.91" fill="#ffd100"/>
<rect x="665.44" y="472.70" width="3.5" height="10.59" fill="#00cca6"/>
<rect x="665.44" y="472.40" width="3.5" height="0.9" fill="#2d8ff5"/>
<rect x="670.25" y="774.00" width="3.5" height="95.50" fill="#fb8000"/>
<rect x="670.25" y="484.80" width="3.5" height="289.20" fill="#ffd100"/>
<rect x="670.25" y="474.20" width="3.5" height="10.60" fill="#00cca6"/>
<rect x="670.25" y="473.90" width="3.5" height="0.9" fill="#2d8ff5"/>
<rect x="675.06" y="774.20" width="3.5" height="95.30" fill="#fb8000"/>
<rect x="675.06" y="485.81" width="3.5" height="288.39" fill="#ffd100"/>
<rect x="675.06" y="475.20" width="3.5" height="10.61" fill="#00cca6"/>
<rect x="675.06" y="474.90" width="3.5" height="0.9" fill="#2d8ff5"/>
<rect x="679.87" y="774.00" width="3.5" height="95.50" fill="#fb8000"/>
<rect x="679.87" y="484.82" width="3.5" height="289.18" fill="#ffd100"/>
<rect x="679.87" y="474.20" width="3.5" height="10.62" fill="#00cca6"/>
<rect x="679.87" y="473.90" width="3.5" height="0.9" fill="#2d8ff5"/>
<rect x="684.69" y="773.80" width="3.5" height="95.70" fill="#fb8000"/>
<rect x="684.69" y="483.74" width="3.5" height="290.06" fill="#ffd100"/>
<rect x="684.69" y="473.10" width="3.5" height="10.64" fill="#00cca6"/>
<rect x="684.69" y="472.80" width="3.5" height="0.9" fill="#2d8ff5"/>
<rect x="689.50" y="773.80" width="3.5" height="95.70" fill="#fb8000"/>
<rect x="689.50" y="484.65" width="3.5" height="289.15" fill="#ffd100"/>
<rect x="689.50" y="474.00" width="3.5" height="10.65" fill="#00cca6"/>
<rect x="689.50" y="473.70" width="3.5" height="0.9" fill="#2d8ff5"/>
<rect x="694.31" y="773.50" width="3.5" height="96.00" fill="#fb8000"/>
<rect x="694.31" y="482.86" width="3.5" height="290.64" fill="#ffd100"/>
<rect x="694.31" y="472.20" width="3.5" height="10.66" fill="#00cca6"/>
<rect x="694.31" y="471.90" width="3.5" height="0.9" fill="#2d8ff5"/>
<rect x="699.12" y="773.00" width="3.5" height="96.50" fill="#fb8000"/>
<rect x="699.12" y="481.77" width="3.5" height="291.23" fill="#ffd100"/>
<rect x="699.12" y="471.10" width="3.5" height="10.67" fill="#00cca6"/>
<rect x="699.12" y="470.80" width="3.5" height="0.9" fill="#2d8ff5"/>
<rect x="703.93" y="773.00" width="3.5" height="96.50" fill="#fb8000"/>
<rect x="703.93" y="481.78" width="3.5" height="291.22" fill="#ffd100"/>
<rect x="703.93" y="471.10" width="3.5" height="10.68" fill="#00cca6"/>
<rect x="703.93" y="470.80" width="3.5" height="0.9" fill="#2d8ff5"/>
<rect x="708.75" y="773.00" width="3.5" height="96.50" fill="#fb8000"/>
<rect x="708.75" y="481.30" width="3.5" height="291.70" fill="#ffd100"/>
<rect x="708.75" y="470.60" width="3.5" height="10.70" fill="#00cca6"/>
<rect x="708.75" y="470.30" width="3.5" height="0.9" fill="#2d8ff5"/>
<rect x="713.56" y="772.80" width="3.5" height="96.70" fill="#fb8000"/>
<rect x="713.56" y="480.91" width="3.5" height="291.89" fill="#ffd100"/>
<rect x="713.56" y="470.20" width="3.5" height="10.71" fill="#00cca6"/>
<rect x="713.56" y="469.90" width="3.5" height="0.9" fill="#2d8ff5"/>
<rect x="718.37" y="772.80" width="3.5" height="96.70" fill="#fb8000"/>
<rect x="718.37" y="480.92" width="3.5" height="291.88" fill="#ffd100"/>
<rect x="718.37" y="470.20" width="3.5" height="10.72" fill="#00cca6"/>
<rect x="718.37" y="469.90" width="3.5" height="0.9" fill="#2d8ff5"/>
<rect x="723.18" y="772.80" width="3.5" height="96.70" fill="#fb8000"/>
<rect x="723.18" y="481.13" width="3.5" height="291.67" fill="#ffd100"/>
<rect x="723.18" y="470.40" width="3.5" height="10.73" fill="#00cca6"/>
<rect x="723.18" y="470.10" width="3.5" height="0.9" fill="#2d8ff5"/>
<rect x="728.00" y="772.20" width="3.5" height="97.30" fill="#fb8000"/>
<rect x="728.00" y="481.65" width="3.5" height="290.55" fill="#ffd100"/>
<rect x="728.00" y="470.90" width="3.5" height="10.75" fill="#00cca6"/>
<rect x="728.00" y="470.60" width="3.5" height="0.9" fill="#2d8ff5"/>
<rect x="732.81" y="772.00" width="3.5" height="97.50" fill="#fb8000"/>
<rect x="732.81" y="482.36" width="3.5" height="289.64" fill="#ffd100"/>
<rect x="732.81" y="471.60" width="3.5" height="10.76" fill="#00cca6"/>
<rect x="732.81" y="471.30" width="3.5" height="0.9" fill="#2d8ff5"/>
<rect x="737.62" y="772.00" width="3.5" height="97.50" fill="#fb8000"/>
<rect x="737.62" y="482.57" width="3.5" height="289.43" fill="#ffd100"/>
<rect x="737.62" y="471.80" width="3.5" height="10.77" fill="#00cca6"/>
<rect x="737.62" y="471.50" width="3.5" height="0.9" fill="#2d8ff5"/>
<rect x="742.43" y="771.80" width="3.5" height="97.70" fill="#fb8000"/>
<rect x="742.43" y="481.48" width="3.5" height="290.32" fill="#ffd100"/>
<rect x="742.43" y="470.70" width="3.5" height="10.78" fill="#00cca6"/>
<rect x="742.43" y="470.40" width="3.5" height="0.9" fill="#2d8ff5"/>
<rect x="747.24" y="771.60" width="3.5" height="97.90" fill="#fb8000"/>
<rect x="747.24" y="481.19" width="3.5" height="290.41" fill="#ffd100"/>
<rect x="747.24" y="470.40" width="3.5" height="10.79" fill="#00cca6"/>
<rect x="747.24" y="470.10" width="3.5" height="0.9" fill="#2d8ff5"/>
<rect x="752.06" y="771.40" width="3.5" height="98.10" fill="#fb8000"/>
<rect x="752.06" y="481.71" width="3.5" height="289.69" fill="#ffd100"/>
<rect x="752.06" y="470.90" width="3.5" height="10.81" fill="#00cca6"/>
<rect x="752.06" y="470.60" width="3.5" height="0.9" fill="#2d8ff5"/>
<rect x="756.87" y="771.20" width="3.5" height="98.30" fill="#fb8000"/>
<rect x="756.87" y="481.52" width="3.5" height="289.68" fill="#ffd100"/>
<rect x="756.87" y="470.70" width="3.5" height="10.82" fill="#00cca6"/>
<rect x="756.87" y="470.40" width="3.5" height="0.9" fill="#2d8ff5"/>
<rect x="761.68" y="771.06" width="3.5" height="98.44" fill="#fb8000"/>
<rect x="761.68" y="480.33" width="3.5" height="290.73" fill="#ffd100"/>
<rect x="761.68" y="469.50" width="3.5" height="10.83" fill="#00cca6"/>
<rect x="761.68" y="469.20" width="3.5" height="0.9" fill="#2d8ff5"/>
<rect x="766.49" y="770.92" width="3.5" height="98.58" fill="#fb8000"/>
<rect x="766.49" y="480.84" width="3.5" height="290.08" fill="#ffd100"/>
<rect x="766.49" y="470.00" width="3.5" height="10.84" fill="#00cca6"/>
<rect x="766.49" y="469.70" width="3.5" height="0.9" fill="#2d8ff5"/>
<rect x="771.31" y="770.78" width="3.5" height="98.72" fill="#fb8000"/>
<rect x="771.31" y="480.16" width="3.5" height="290.62" fill="#ffd100"/>
<rect x="771.31" y="469.30" width="3.5" height="10.86" fill="#00cca6"/>
<rect x="771.31" y="469.00" width="3.5" height="0.9" fill="#2d8ff5"/>
<rect x="776.12" y="770.64" width="3.5" height="98.86" fill="#fb8000"/>
<rect x="776.12" y="479.27" width="3.5" height="291.37" fill="#ffd100"/>
<rect x="776.12" y="468.40" width="3.5" height="10.87" fill="#00cca6"/>
<rect x="776.12" y="468.10" width="3.5" height="0.9" fill="#2d8ff5"/>
<rect x="780.93" y="770.50" width="3.5" height="99.00" fill="#fb8000"/>
<rect x="780.93" y="477.88" width="3.5" height="292.62" fill="#ffd100"/>
<rect x="780.93" y="467.00" width="3.5" height="10.88" fill="#00cca6"/>
<rect x="780.93" y="466.70" width="3.5" height="0.9" fill="#2d8ff5"/>
<rect x="785.74" y="770.24" width="3.5" height="99.26" fill="#fb8000"/>
<rect x="785.74" y="477.19" width="3.5" height="293.05" fill="#ffd100"/>
<rect x="785.74" y="466.30" width="3.5" height="10.89" fill="#00cca6"/>
<rect x="785.74" y="466.00" width="3.5" height="0.9" fill="#2d8ff5"/>
<rect x="790.55" y="769.98" width="3.5" height="99.52" fill="#fb8000"/>
<rect x="790.55" y="476.80" width="3.5" height="293.18" fill="#ffd100"/>
<rect x="790.55" y="465.90" width="3.5" height="10.90" fill="#00cca6"/>
<rect x="790.55" y="465.60" width="3.5" height="0.9" fill="#2d8ff5"/>
<rect x="795.37" y="769.72" width="3.5" height="99.78" fill="#fb8000"/>
<rect x="795.37" y="474.22" width="3.5" height="295.50" fill="#ffd100"/>
<rect x="795.37" y="463.30" width="3.5" height="10.92" fill="#00cca6"/>
<rect x="795.37" y="463.00" width="3.5" height="0.9" fill="#2d8ff5"/>
<rect x="800.18" y="769.46" width="3.5" height="100.04" fill="#fb8000"/>
<rect x="800.18" y="472.03" width="3.5" height="297.43" fill="#ffd100"/>
<rect x="800.18" y="461.10" width="3.5" height="10.93" fill="#00cca6"/>
<rect x="800.18" y="460.80" width="3.5" height="0.9" fill="#2d8ff5"/>
<rect x="804.99" y="769.20" width="3.5" height="100.30" fill="#fb8000"/>
<rect x="804.99" y="470.94" width="3.5" height="298.26" fill="#ffd100"/>
<rect x="804.99" y="460.00" width="3.5" height="10.94" fill="#00cca6"/>
<rect x="804.99" y="459.70" width="3.5" height="0.9" fill="#2d8ff5"/>
<rect x="809.80" y="769.02" width="3.5" height="100.48" fill="#fb8000"/>
<rect x="809.80" y="469.35" width="3.5" height="299.67" fill="#ffd100"/>
<rect x="809.80" y="458.40" width="3.5" height="10.95" fill="#00cca6"/>
<rect x="809.80" y="458.10" width="3.5" height="0.9" fill="#2d8ff5"/>
<rect x="814.61" y="768.84" width="3.5" height="100.66" fill="#fb8000"/>
<rect x="814.61" y="468.36" width="3.5" height="300.48" fill="#ffd100"/>
<rect x="814.61" y="457.40" width="3.5" height="10.96" fill="#00cca6"/>
<rect x="814.61" y="457.10" width="3.5" height="0.9" fill="#2d8ff5"/>
<rect x="819.43" y="768.66" width="3.5" height="100.84" fill="#fb8000"/>
<rect x="819.43" y="467.28" width="3.5" height="301.38" fill="#ffd100"/>
<rect x="819.43" y="456.30" width="3.5" height="10.98" fill="#00cca6"/>
<rect x="819.43" y="456.00" width="3.5" height="0.9" fill="#2d8ff5"/>
<rect x="824.24" y="768.48" width="3.5" height="101.02" fill="#fb8000"/>
<rect x="824.24" y="467.09" width="3.5" height="301.39" fill="#ffd100"/>
<rect x="824.24" y="456.10" width="3.5" height="10.99" fill="#00cca6"/>
<rect x="824.24" y="455.80" width="3.5" height="0.9" fill="#2d8ff5"/>
<rect x="829.05" y="768.30" width="3.5" height="101.20" fill="#fb8000"/>
<rect x="829.05" y="465.30" width="3.5" height="303.00" fill="#ffd100"/>
<rect x="829.05" y="454.30" width="3.5" height="11.00" fill="#00cca6"/>
<rect x="829.05" y="454.00" width="3.5" height="0.9" fill="#2d8ff5"/>
<rect x="833.86" y="768.14" width="3.5" height="101.36" fill="#fb8000"/>
<rect x="833.86" y="463.01" width="3.5" height="305.13" fill="#ffd100"/>
<rect x="833.86" y="452.00" width="3.5" height="11.01" fill="#00cca6"/>
<rect x="833.86" y="451.70" width="3.5" height="0.9" fill="#2d8ff5"/>
<rect x="838.68" y="767.98" width="3.5" height="101.52" fill="#fb8000"/>
<rect x="838.68" y="460.93" width="3.5" height="307.05" fill="#ffd100"/>
<rect x="838.68" y="449.90" width="3.5" height="11.03" fill="#00cca6"/>
<rect x="838.68" y="449.60" width="3.5" height="0.9" fill="#2d8ff5"/>
<rect x="843.49" y="767.82" width="3.5" height="101.68" fill="#fb8000"/>
<rect x="843.49" y="459.84" width="3.5" height="307.98" fill="#ffd100"/>
<rect x="843.49" y="448.80" width="3.5" height="11.04" fill="#00cca6"/>
<rect x="843.49" y="448.50" width="3.5" height="0.9" fill="#2d8ff5"/>
<rect x="848.30" y="767.66" width="3.5" height="101.84" fill="#fb8000"/>
<rect x="848.30" y="458.85" width="3.5" height="308.81" fill="#ffd100"/>
<rect x="848.30" y="447.80" width="3.5" height="11.05" fill="#00cca6"/>
<rect x="848.30" y="447.50" width="3.5" height="0.9" fill="#2d8ff5"/>
<rect x="853.11" y="767.50" width="3.5" height="102.00" fill="#fb8000"/>
<rect x="853.11" y="457.96" width="3.5" height="309.54" fill="#ffd100"/>
<rect x="853.11" y="446.90" width="3.5" height="11.06" fill="#00cca6"/>
<rect x="853.11" y="446.60" width="3.5" height="0.9" fill="#2d8ff5"/>
<rect x="857.92" y="767.30" width="3.5" height="102.20" fill="#fb8000"/>
<rect x="857.92" y="457.07" width="3.5" height="310.23" fill="#ffd100"/>
<rect x="857.92" y="446.00" width="3.5" height="11.07" fill="#00cca6"/>
<rect x="857.92" y="445.70" width="3.5" height="0.9" fill="#2d8ff5"/>
<rect x="862.74" y="767.10" width="3.5" height="102.40" fill="#fb8000"/>
<rect x="862.74" y="456.19" width="3.5" height="310.91" fill="#ffd100"/>
<rect x="862.74" y="445.10" width="3.5" height="11.09" fill="#00cca6"/>
<rect x="862.74" y="444.80" width="3.5" height="0.9" fill="#2d8ff5"/>
<rect x="867.55" y="766.90" width="3.5" height="102.60" fill="#fb8000"/>
<rect x="867.55" y="453.10" width="3.5" height="313.80" fill="#ffd100"/>
<rect x="867.55" y="442.00" width="3.5" height="11.10" fill="#00cca6"/>
<rect x="867.55" y="441.70" width="3.5" height="0.9" fill="#2d8ff5"/>
<rect x="872.36" y="766.70" width="3.5" height="102.80" fill="#fb8000"/>
<rect x="872.36" y="453.11" width="3.5" height="313.59" fill="#ffd100"/>
<rect x="872.36" y="442.00" width="3.5" height="11.11" fill="#00cca6"/>
<rect x="872.36" y="441.70" width="3.5" height="0.9" fill="#2d8ff5"/>
<rect x="877.17" y="766.50" width="3.5" height="103.00" fill="#fb8000"/>
<rect x="877.17" y="453.92" width="3.5" height="312.58" fill="#ffd100"/>
<rect x="877.17" y="442.80" width="3.5" height="11.12" fill="#00cca6"/>
<rect x="877.17" y="442.50" width="3.5" height="0.9" fill="#2d8ff5"/>
<rect x="881.99" y="766.40" width="3.5" height="103.10" fill="#fb8000"/>
<rect x="881.99" y="452.44" width="3.5" height="313.96" fill="#ffd100"/>
<rect x="881.99" y="441.30" width="3.5" height="11.14" fill="#00cca6"/>
<rect x="881.99" y="441.00" width="3.5" height="0.9" fill="#2d8ff5"/>
<rect x="886.80" y="765.80" width="3.5" height="103.70" fill="#fb8000"/>
<rect x="886.80" y="449.15" width="3.5" height="316.65" fill="#ffd100"/>
<rect x="886.80" y="438.00" width="3.5" height="11.15" fill="#00cca6"/>
<rect x="886.80" y="437.70" width="3.5" height="0.9" fill="#2d8ff5"/>
<rect x="891.61" y="766.00" width="3.5" height="103.50" fill="#fb8000"/>
<rect x="891.61" y="449.16" width="3.5" height="316.84" fill="#ffd100"/>
<rect x="891.61" y="438.00" width="3.5" height="11.16" fill="#00cca6"/>
<rect x="891.61" y="437.70" width="3.5" height="0.9" fill="#2d8ff5"/>
<rect x="896.42" y="766.00" width="3.5" height="103.50" fill="#fb8000"/>
<rect x="896.42" y="449.47" width="3.5" height="316.53" fill="#ffd100"/>
<rect x="896.42" y="438.30" width="3.5" height="11.17" fill="#00cca6"/>
<rect x="896.42" y="438.00" width="3.5" height="0.9" fill="#2d8ff5"/>
<rect x="901.23" y="766.00" width="3.5" height="103.50" fill="#fb8000"/>
<rect x="901.23" y="450.58" width="3.5" height="315.42" fill="#ffd100"/>
<rect x="901.23" y="439.40" width="3.5" height="11.18" fill="#00cca6"/>
<rect x="901.23" y="439.10" width="3.5" height="0.9" fill="#2d8ff5"/>
<rect x="906.05" y="765.70" width="3.5" height="103.80" fill="#fb8000"/>
<rect x="906.05" y="450.60" width="3.5" height="315.10" fill="#ffd100"/>
<rect x="906.05" y="439.40" width="3.5" height="11.20" fill="#00cca6"/>
<rect x="906.05" y="439.10" width="3.5" height="0.9" fill="#2d8ff5"/>
<rect x="910.86" y="765.00" width="3.5" height="104.50" fill="#fb8000"/>
<rect x="910.86" y="450.21" width="3.5" height="314.79" fill="#ffd100"/>
<rect x="910.86" y="439.00" width="3.5" height="11.21" fill="#00cca6"/>
<rect x="910.86" y="438.70" width="3.5" height="0.9" fill="#2d8ff5"/>
<rect x="915.67" y="764.50" width="3.5" height="105.00" fill="#fb8000"/>
<rect x="915.67" y="449.22" width="3.5" height="315.28" fill="#ffd100"/>
<rect x="915.67" y="438.00" width="3.5" height="11.22" fill="#00cca6"/>
<rect x="915.67" y="437.70" width="3.5" height="0.9" fill="#2d8ff5"/>
<rect x="920.48" y="764.20" width="3.5" height="105.30" fill="#fb8000"/>
<rect x="920.48" y="448.63" width="3.5" height="315.57" fill="#ffd100"/>
<rect x="920.48" y="437.40" width="3.5" height="11.23" fill="#00cca6"/>
<rect x="920.48" y="437.10" width="3.5" height="0.9" fill="#2d8ff5"/>
<rect x="925.29" y="764.00" width="3.5" height="105.50" fill="#fb8000"/>
<rect x="925.29" y="448.34" width="3.5" height="315.66" fill="#ffd100"/>
<rect x="925.29" y="437.10" width="3.5" height="11.24" fill="#00cca6"/>
<rect x="925.29" y="436.80" width="3.5" height="0.9" fill="#2d8ff5"/>
<rect x="930.11" y="763.20" width="3.5" height="106.30" fill="#fb8000"/>
<rect x="930.11" y="446.16" width="3.5" height="317.04" fill="#ffd100"/>
<rect x="930.11" y="434.90" width="3.5" height="11.26" fill="#00cca6"/>
<rect x="930.11" y="434.60" width="3.5" height="0.9" fill="#2d8ff5"/>
<rect x="934.92" y="758.50" width="3.5" height="111.00" fill="#fb8000"/>
<rect x="934.92" y="444.57" width="3.5" height="313.93" fill="#ffd100"/>
<rect x="934.92" y="433.30" width="3.5" height="11.27" fill="#00cca6"/>
<rect x="934.92" y="433.00" width="3.5" height="0.9" fill="#2d8ff5"/>
<rect x="939.73" y="757.90" width="3.5" height="111.60" fill="#fb8000"/>
<rect x="939.73" y="444.58" width="3.5" height="313.32" fill="#ffd100"/>
<rect x="939.73" y="433.30" width="3.5" height="11.28" fill="#00cca6"/>
<rect x="939.73" y="433.00" width="3.5" height="0.9" fill="#2d8ff5"/>
<rect x="944.54" y="757.20" width="3.5" height="112.30" fill="#fb8000"/>
<rect x="944.54" y="443.19" width="3.5" height="314.01" fill="#ffd100"/>
<rect x="944.54" y="431.90" width="3.5" height="11.29" fill="#00cca6"/>
<rect x="944.54" y="431.60" width="3.5" height="0.9" fill="#2d8ff5"/>
<rect x="949.36" y="757.10" width="3.5" height="112.40" fill="#fb8000"/>
<rect x="949.36" y="441.91" width="3.5" height="315.19" fill="#ffd100"/>
<rect x="949.36" y="430.60" width="3.5" height="11.31" fill="#00cca6"/>
<rect x="949.36" y="430.30" width="3.5" height="0.9" fill="#2d8ff5"/>
<rect x="954.17" y="756.50" width="3.5" height="113.00" fill="#fb8000"/>
<rect x="954.17" y="439.82" width="3.5" height="316.68" fill="#ffd100"/>
<rect x="954.17" y="428.50" width="3.5" height="11.32" fill="#00cca6"/>
<rect x="954.17" y="428.20" width="3.5" height="0.9" fill="#2d8ff5"/>
<rect x="958.98" y="758.20" width="3.5" height="111.30" fill="#fb8000"/>
<rect x="958.98" y="439.43" width="3.5" height="318.77" fill="#ffd100"/>
<rect x="958.98" y="428.10" width="3.5" height="11.33" fill="#00cca6"/>
<rect x="958.98" y="427.80" width="3.5" height="0.9" fill="#2d8ff5"/>
<rect x="963.79" y="758.75" width="3.5" height="110.75" fill="#fb8000"/>
<rect x="963.79" y="440.34" width="3.5" height="318.41" fill="#ffd100"/>
<rect x="963.79" y="429.00" width="3.5" height="11.34" fill="#00cca6"/>
<rect x="963.79" y="428.70" width="3.5" height="0.9" fill="#2d8ff5"/>
<rect x="968.60" y="759.30" width="3.5" height="110.20" fill="#fb8000"/>
<rect x="968.60" y="443.15" width="3.5" height="316.15" fill="#ffd100"/>
<rect x="968.60" y="431.80" width="3.5" height="11.35" fill="#00cca6"/>
<rect x="968.60" y="431.50" width="3.5" height="0.9" fill="#2d8ff5"/>
<rect x="973.42" y="758.90" width="3.5" height="110.60" fill="#fb8000"/>
<rect x="973.42" y="442.47" width="3.5" height="316.43" fill="#ffd100"/>
<rect x="973.42" y="431.10" width="3.5" height="11.37" fill="#00cca6"/>
<rect x="973.42" y="430.80" width="3.5" height="0.9" fill="#2d8ff5"/>
<rect x="978.23" y="758.00" width="3.5" height="111.50" fill="#fb8000"/>
<rect x="978.23" y="440.38" width="3.5" height="317.62" fill="#ffd100"/>
<rect x="978.23" y="429.00" width="3.5" height="11.38" fill="#00cca6"/>
<rect x="978.23" y="428.70" width="3.5" height="0.9" fill="#2d8ff5"/>
<rect x="983.04" y="759.00" width="3.5" height="110.50" fill="#fb8000"/>
<rect x="983.04" y="438.39" width="3.5" height="320.61" fill="#ffd100"/>
<rect x="983.04" y="427.00" width="3.5" height="11.39" fill="#00cca6"/>
<rect x="983.04" y="426.70" width="3.5" height="0.9" fill="#2d8ff5"/>
<rect x="987.85" y="759.20" width="3.5" height="110.30" fill="#fb8000"/>
<rect x="987.85" y="438.10" width="3.5" height="321.10" fill="#ffd100"/>
<rect x="987.85" y="426.70" width="3.5" height="11.40" fill="#00cca6"/>
<rect x="987.85" y="426.40" width="3.5" height="0.9" fill="#2d8ff5"/>
<rect x="992.67" y="759.60" width="3.5" height="109.90" fill="#fb8000"/>
<rect x="992.67" y="439.22" width="3.5" height="320.38" fill="#ffd100"/>
<rect x="992.67" y="427.80" width="3.5" height="11.42" fill="#00cca6"/>
<rect x="992.67" y="427.50" width="3.5" height="0.9" fill="#2d8ff5"/>
<rect x="997.48" y="760.00" width="3.5" height="109.50" fill="#fb8000"/>
<rect x="997.48" y="440.23" width="3.5" height="319.77" fill="#ffd100"/>
<rect x="997.48" y="428.80" width="3.5" height="11.43" fill="#00cca6"/>
<rect x="997.48" y="428.50" width="3.5" height="0.9" fill="#2d8ff5"/>
<rect x="1002.29" y="760.40" width="3.5" height="109.10" fill="#fb8000"/>
<rect x="1002.29" y="441.34" width="3.5" height="319.06" fill="#ffd100"/>
<rect x="1002.29" y="429.90" width="3.5" height="11.44" fill="#00cca6"/>
<rect x="1002.29" y="429.60" width="3.5" height="0.9" fill="#2d8ff5"/>
<rect x="1007.10" y="760.80" width="3.5" height="108.70" fill="#fb8000"/>
<rect x="1007.10" y="441.85" width="3.5" height="318.95" fill="#ffd100"/>
<rect x="1007.10" y="430.40" width="3.5" height="11.45" fill="#00cca6"/>
<rect x="1007.10" y="430.10" width="3.5" height="0.9" fill="#2d8ff5"/>
<rect x="1011.91" y="761.20" width="3.5" height="108.30" fill="#fb8000"/>
<rect x="1011.91" y="439.26" width="3.5" height="321.94" fill="#ffd100"/>
<rect x="1011.91" y="427.80" width="3.5" height="11.46" fill="#00cca6"/>
<rect x="1011.91" y="427.50" width="3.5" height="0.9" fill="#2d8ff5"/>
<rect x="1016.73" y="761.23" width="3.5" height="108.27" fill="#fb8000"/>
<rect x="1016.73" y="438.48" width="3.5" height="322.76" fill="#ffd100"/>
<rect x="1016.73" y="427.00" width="3.5" height="11.48" fill="#00cca6"/>
<rect x="1016.73" y="426.70" width="3.5" height="0.9" fill="#2d8ff5"/>
<rect x="1021.54" y="761.27" width="3.5" height="108.23" fill="#fb8000"/>
<rect x="1021.54" y="437.99" width="3.5" height="323.28" fill="#ffd100"/>
<rect x="1021.54" y="426.50" width="3.5" height="11.49" fill="#00cca6"/>
<rect x="1021.54" y="426.20" width="3.5" height="0.9" fill="#2d8ff5"/>
<rect x="1026.35" y="761.30" width="3.5" height="108.20" fill="#fb8000"/>
<rect x="1026.35" y="437.80" width="3.5" height="323.50" fill="#ffd100"/>
<rect x="1026.35" y="426.30" width="3.5" height="11.50" fill="#00cca6"/>
<rect x="1026.35" y="426.00" width="3.5" height="0.9" fill="#2d8ff5"/>
<rect x="1031.16" y="761.65" width="3.5" height="107.85" fill="#fb8000"/>
<rect x="1031.16" y="439.31" width="3.5" height="322.34" fill="#ffd100"/>
<rect x="1031.16" y="427.80" width="3.5" height="11.51" fill="#00cca6"/>
<rect x="1031.16" y="427.50" width="3.5" height="0.9" fill="#2d8ff5"/>
<rect x="1035.98" y="762.00" width="3.5" height="107.50" fill="#fb8000"/>
<rect x="1035.98" y="440.03" width="3.5" height="321.97" fill="#ffd100"/>
<rect x="1035.98" y="428.50" width="3.5" height="11.53" fill="#00cca6"/>
<rect x="1035.98" y="428.20" width="3.5" height="0.9" fill="#2d8ff5"/>
<rect x="1040.79" y="761.25" width="3.5" height="108.25" fill="#fb8000"/>
<rect x="1040.79" y="441.64" width="3.5" height="319.61" fill="#ffd100"/>
<rect x="1040.79" y="430.10" width="3.5" height="11.54" fill="#00cca6"/>
<rect x="1040.79" y="429.80" width="3.5" height="0.9" fill="#2d8ff5"/>
<rect x="1045.60" y="760.50" width="3.5" height="109.00" fill="#fb8000"/>
<rect x="1045.60" y="440.75" width="3.5" height="319.75" fill="#ffd100"/>
<rect x="1045.60" y="429.20" width="3.5" height="11.55" fill="#00cca6"/>
<rect x="1045.60" y="428.90" width="3.5" height="0.9" fill="#2d8ff5"/>
<rect x="1050.41" y="760.10" width="3.5" height="109.40" fill="#fb8000"/>
<rect x="1050.41" y="439.36" width="3.5" height="320.74" fill="#ffd100"/>
<rect x="1050.41" y="427.80" width="3.5" height="11.56" fill="#00cca6"/>
<rect x="1050.41" y="427.50" width="3.5" height="0.9" fill="#2d8ff5"/>
<rect x="1055.22" y="759.70" width="3.5" height="109.80" fill="#fb8000"/>
<rect x="1055.22" y="438.77" width="3.5" height="320.93" fill="#ffd100"/>
<rect x="1055.22" y="427.20" width="3.5" height="11.57" fill="#00cca6"/>
<rect x="1055.22" y="426.90" width="3.5" height="0.9" fill="#2d8ff5"/>
<rect x="1060.04" y="760.70" width="3.5" height="108.80" fill="#fb8000"/>
<rect x="1060.04" y="438.49" width="3.5" height="322.21" fill="#ffd100"/>
<rect x="1060.04" y="426.90" width="3.5" height="11.59" fill="#00cca6"/>
<rect x="1060.04" y="426.60" width="3.5" height="0.9" fill="#2d8ff5"/>
<rect x="1064.85" y="760.85" width="3.5" height="108.65" fill="#fb8000"/>
<rect x="1064.85" y="437.90" width="3.5" height="322.95" fill="#ffd100"/>
<rect x="1064.85" y="426.30" width="3.5" height="11.60" fill="#00cca6"/>
<rect x="1064.85" y="426.00" width="3.5" height="0.9" fill="#2d8ff5"/>
<rect x="1069.66" y="761.00" width="3.5" height="108.50" fill="#fb8000"/>
<rect x="1069.66" y="438.31" width="3.5" height="322.69" fill="#ffd100"/>
<rect x="1069.66" y="426.70" width="3.5" height="11.61" fill="#00cca6"/>
<rect x="1069.66" y="426.40" width="3.5" height="0.9" fill="#2d8ff5"/>
<rect x="1074.47" y="760.96" width="3.5" height="108.54" fill="#fb8000"/>
<rect x="1074.47" y="437.72" width="3.5" height="323.24" fill="#ffd100"/>
<rect x="1074.47" y="426.10" width="3.5" height="11.62" fill="#00cca6"/>
<rect x="1074.47" y="425.80" width="3.5" height="0.9" fill="#2d8ff5"/>
<rect x="1079.28" y="760.92" width="3.5" height="108.58" fill="#fb8000"/>
<rect x="1079.28" y="436.53" width="3.5" height="324.39" fill="#ffd100"/>
<rect x="1079.28" y="424.90" width="3.5" height="11.63" fill="#00cca6"/>
<rect x="1079.28" y="424.60" width="3.5" height="0.9" fill="#2d8ff5"/>
<rect x="1084.10" y="760.88" width="3.5" height="108.62" fill="#fb8000"/>
<rect x="1084.10" y="435.45" width="3.5" height="325.43" fill="#ffd100"/>
<rect x="1084.10" y="423.80" width="3.5" height="11.65" fill="#00cca6"/>
<rect x="1084.10" y="423.50" width="3.5" height="0.9" fill="#2d8ff5"/>
<rect x="1088.91" y="760.84" width="3.5" height="108.66" fill="#fb8000"/>
<rect x="1088.91" y="434.96" width="3.5" height="325.88" fill="#ffd100"/>
<rect x="1088.91" y="423.30" width="3.5" height="11.66" fill="#00cca6"/>
<rect x="1088.91" y="423.00" width="3.5" height="0.9" fill="#2d8ff5"/>
<rect x="1093.72" y="760.80" width="3.5" height="108.70" fill="#fb8000"/>
<rect x="1093.72" y="434.47" width="3.5" height="326.33" fill="#ffd100"/>
<rect x="1093.72" y="422.80" width="3.5" height="11.67" fill="#00cca6"/>
<rect x="1093.72" y="422.50" width="3.5" height="0.9" fill="#2d8ff5"/>
<rect x="1098.53" y="760.64" width="3.5" height="108.86" fill="#fb8000"/>
<rect x="1098.53" y="435.18" width="3.5" height="325.46" fill="#ffd100"/>
<rect x="1098.53" y="423.50" width="3.5" height="11.68" fill="#00cca6"/>
<rect x="1098.53" y="423.20" width="3.5" height="0.9" fill="#2d8ff5"/>
<rect x="1103.35" y="760.48" width="3.5" height="109.02" fill="#fb8000"/>
<rect x="1103.35" y="435.70" width="3.5" height="324.78" fill="#ffd100"/>
<rect x="1103.35" y="424.00" width="3.5" height="11.70" fill="#00cca6"/>
<rect x="1103.35" y="423.70" width="3.5" height="0.9" fill="#2d8ff5"/>
<rect x="1108.16" y="760.32" width="3.5" height="109.18" fill="#fb8000"/>
<rect x="1108.16" y="436.21" width="3.5" height="324.11" fill="#ffd100"/>
<rect x="1108.16" y="424.50" width="3.5" height="11.71" fill="#00cca6"/>
<rect x="1108.16" y="424.20" width="3.5" height="0.9" fill="#2d8ff5"/>
<rect x="1112.97" y="760.16" width="3.5" height="109.34" fill="#fb8000"/>
<rect x="1112.97" y="434.62" width="3.5" height="325.54" fill="#ffd100"/>
<rect x="1112.97" y="422.90" width="3.5" height="11.72" fill="#00cca6"/>
<rect x="1112.97" y="422.60" width="3.5" height="0.9" fill="#2d8ff5"/>
<rect x="1117.78" y="760.00" width="3.5" height="109.50" fill="#fb8000"/>
<rect x="1117.78" y="433.63" width="3.5" height="326.37" fill="#ffd100"/>
<rect x="1117.78" y="421.90" width="3.5" height="11.73" fill="#00cca6"/>
<rect x="1117.78" y="421.60" width="3.5" height="0.9" fill="#2d8ff5"/>
<rect x="1122.59" y="631.00" width="3.5" height="238.50" fill="#fb8000"/>
<rect x="1122.59" y="211.00" width="3.5" height="420.00" fill="#ffd100"/>
<rect x="1122.59" y="198.00" width="3.5" height="13.00" fill="#00cca6"/>
<rect x="1122.59" y="197.70" width="3.5" height="0.9" fill="#2d8ff5"/>
<rect x="1127.41" y="656.10" width="3.5" height="213.40" fill="#fb8000"/>
<rect x="1127.41" y="250.40" width="3.5" height="405.70" fill="#ffd100"/>
<rect x="1127.41" y="237.40" width="3.5" height="13.00" fill="#00cca6"/>
<rect x="1127.41" y="237.10" width="3.5" height="0.9" fill="#2d8ff5"/>
<rect x="1132.22" y="729.30" width="3.5" height="140.20" fill="#fb8000"/>
<rect x="1132.22" y="378.80" width="3.5" height="350.50" fill="#ffd100"/>
<rect x="1132.22" y="367.50" width="3.5" height="11.30" fill="#00cca6"/>
<rect x="1132.22" y="367.20" width="3.5" height="0.9" fill="#2d8ff5"/>
<rect x="1137.03" y="752.00" width="3.5" height="117.50" fill="#fb8000"/>
<rect x="1137.03" y="421.20" width="3.5" height="330.80" fill="#ffd100"/>
<rect x="1137.03" y="409.90" width="3.5" height="11.30" fill="#00cca6"/>
<rect x="1137.03" y="409.60" width="3.5" height="0.9" fill="#2d8ff5"/>
<rect x="1141.84" y="753.80" width="3.5" height="115.70" fill="#fb8000"/>
<rect x="1141.84" y="426.89" width="3.5" height="326.91" fill="#ffd100"/>
<rect x="1141.84" y="415.10" width="3.5" height="11.79" fill="#00cca6"/>
<rect x="1141.84" y="414.80" width="3.5" height="0.9" fill="#2d8ff5"/>
<rect x="1146.66" y="754.00" width="3.5" height="115.50" fill="#fb8000"/>
<rect x="1146.66" y="426.91" width="3.5" height="327.09" fill="#ffd100"/>
<rect x="1146.66" y="415.10" width="3.5" height="11.81" fill="#00cca6"/>
<rect x="1146.66" y="414.80" width="3.5" height="0.9" fill="#2d8ff5"/>
<rect x="1151.47" y="754.20" width="3.5" height="115.30" fill="#fb8000"/>
<rect x="1151.47" y="426.02" width="3.5" height="328.18" fill="#ffd100"/>
<rect x="1151.47" y="414.20" width="3.5" height="11.82" fill="#00cca6"/>
<rect x="1151.47" y="413.90" width="3.5" height="0.9" fill="#2d8ff5"/>
<rect x="1156.28" y="754.47" width="3.5" height="115.03" fill="#fb8000"/>
<rect x="1156.28" y="426.03" width="3.5" height="328.44" fill="#ffd100"/>
<rect x="1156.28" y="414.20" width="3.5" height="11.83" fill="#00cca6"/>
<rect x="1156.28" y="413.90" width="3.5" height="0.9" fill="#2d8ff5"/>
<rect x="1161.09" y="754.73" width="3.5" height="114.77" fill="#fb8000"/>
<rect x="1161.09" y="426.74" width="3.5" height="327.99" fill="#ffd100"/>
<rect x="1161.09" y="414.90" width="3.5" height="11.84" fill="#00cca6"/>
<rect x="1161.09" y="414.60" width="3.5" height="0.9" fill="#2d8ff5"/>
<rect x="1165.90" y="755.00" width="3.5" height="114.50" fill="#fb8000"/>
<rect x="1165.90" y="427.35" width="3.5" height="327.65" fill="#ffd100"/>
<rect x="1165.90" y="415.50" width="3.5" height="11.85" fill="#00cca6"/>
<rect x="1165.90" y="415.20" width="3.5" height="0.9" fill="#2d8ff5"/>
<rect x="1170.72" y="755.10" width="3.5" height="114.40" fill="#fb8000"/>
<rect x="1170.72" y="428.17" width="3.5" height="326.93" fill="#ffd100"/>
<rect x="1170.72" y="416.30" width="3.5" height="11.87" fill="#00cca6"/>
<rect x="1170.72" y="416.00" width="3.5" height="0.9" fill="#2d8ff5"/>
<rect x="1175.53" y="755.20" width="3.5" height="114.30" fill="#fb8000"/>
<rect x="1175.53" y="428.78" width="3.5" height="326.42" fill="#ffd100"/>
<rect x="1175.53" y="416.90" width="3.5" height="11.88" fill="#00cca6"/>
<rect x="1175.53" y="416.60" width="3.5" height="0.9" fill="#2d8ff5"/>
<rect x="1180.34" y="755.30" width="3.5" height="114.20" fill="#fb8000"/>
<rect x="1180.34" y="428.39" width="3.5" height="326.91" fill="#ffd100"/>
<rect x="1180.34" y="416.50" width="3.5" height="11.89" fill="#00cca6"/>
<rect x="1180.34" y="416.20" width="3.5" height="0.9" fill="#2d8ff5"/>
<rect x="1185.15" y="755.30" width="3.5" height="114.20" fill="#fb8000"/>
<rect x="1185.15" y="427.00" width="3.5" height="328.30" fill="#ffd100"/>
<rect x="1185.15" y="415.10" width="3.5" height="11.90" fill="#00cca6"/>
<rect x="1185.15" y="414.80" width="3.5" height="0.9" fill="#2d8ff5"/>
<rect x="1189.97" y="755.30" width="3.5" height="114.20" fill="#fb8000"/>
<rect x="1189.97" y="426.22" width="3.5" height="329.08" fill="#ffd100"/>
<rect x="1189.97" y="414.30" width="3.5" height="11.92" fill="#00cca6"/>
<rect x="1189.97" y="414.00" width="3.5" height="0.9" fill="#2d8ff5"/>
<rect x="1194.78" y="756.30" width="3.5" height="113.20" fill="#fb8000"/>
<rect x="1194.78" y="428.63" width="3.5" height="327.67" fill="#ffd100"/>
<rect x="1194.78" y="416.70" width="3.5" height="11.93" fill="#00cca6"/>
<rect x="1194.78" y="416.40" width="3.5" height="0.9" fill="#2d8ff5"/>
<rect x="1199.59" y="756.47" width="3.5" height="113.03" fill="#fb8000"/>
<rect x="1199.59" y="430.04" width="3.5" height="326.44" fill="#ffd100"/>
<rect x="1199.59" y="418.10" width="3.5" height="11.94" fill="#00cca6"/>
<rect x="1199.59" y="417.80" width="3.5" height="0.9" fill="#2d8ff5"/>
<rect x="1204.40" y="756.65" width="3.5" height="112.85" fill="#fb8000"/>
<rect x="1204.40" y="429.65" width="3.5" height="327.00" fill="#ffd100"/>
<rect x="1204.40" y="417.70" width="3.5" height="11.95" fill="#00cca6"/>
<rect x="1204.40" y="417.40" width="3.5" height="0.9" fill="#2d8ff5"/>
<rect x="1209.21" y="756.83" width="3.5" height="112.67" fill="#fb8000"/>
<rect x="1209.21" y="430.06" width="3.5" height="326.76" fill="#ffd100"/>
<rect x="1209.21" y="418.10" width="3.5" height="11.96" fill="#00cca6"/>
<rect x="1209.21" y="417.80" width="3.5" height="0.9" fill="#2d8ff5"/>
<rect x="1214.03" y="757.00" width="3.5" height="112.50" fill="#fb8000"/>
<rect x="1214.03" y="429.48" width="3.5" height="327.52" fill="#ffd100"/>
<rect x="1214.03" y="417.50" width="3.5" height="11.98" fill="#00cca6"/>
<rect x="1214.03" y="417.20" width="3.5" height="0.9" fill="#2d8ff5"/>
<rect x="1218.84" y="757.10" width="3.5" height="112.40" fill="#fb8000"/>
<rect x="1218.84" y="428.29" width="3.5" height="328.81" fill="#ffd100"/>
<rect x="1218.84" y="416.30" width="3.5" height="11.99" fill="#00cca6"/>
<rect x="1218.84" y="416.00" width="3.5" height="0.9" fill="#2d8ff5"/>
<rect x="1223.65" y="757.20" width="3.5" height="112.30" fill="#fb8000"/>
<rect x="1223.65" y="428.30" width="3.5" height="328.90" fill="#ffd100"/>
<rect x="1223.65" y="416.30" width="3.5" height="12.00" fill="#00cca6"/>
<rect x="1223.65" y="416.00" width="3.5" height="0.9" fill="#2d8ff5"/>
<rect x="1228.46" y="757.30" width="3.5" height="112.20" fill="#fb8000"/>
<rect x="1228.46" y="428.31" width="3.5" height="328.99" fill="#ffd100"/>
<rect x="1228.46" y="416.30" width="3.5" height="12.01" fill="#00cca6"/>
<rect x="1228.46" y="416.00" width="3.5" height="0.9" fill="#2d8ff5"/>
<rect x="1233.27" y="757.40" width="3.5" height="112.10" fill="#fb8000"/>
<rect x="1233.27" y="429.02" width="3.5" height="328.38" fill="#ffd100"/>
<rect x="1233.27" y="417.00" width="3.5" height="12.02" fill="#00cca6"/>
<rect x="1233.27" y="416.70" width="3.5" height="0.9" fill="#2d8ff5"/>
<rect x="1238.09" y="757.50" width="3.5" height="112.00" fill="#fb8000"/>
<rect x="1238.09" y="429.04" width="3.5" height="328.46" fill="#ffd100"/>
<rect x="1238.09" y="417.00" width="3.5" height="12.04" fill="#00cca6"/>
<rect x="1238.09" y="416.70" width="3.5" height="0.9" fill="#2d8ff5"/>
<rect x="1242.90" y="757.26" width="3.5" height="112.24" fill="#fb8000"/>
<rect x="1242.90" y="429.45" width="3.5" height="327.81" fill="#ffd100"/>
<rect x="1242.90" y="417.40" width="3.5" height="12.05" fill="#00cca6"/>
<rect x="1242.90" y="417.10" width="3.5" height="0.9" fill="#2d8ff5"/>
<rect x="1247.71" y="757.02" width="3.5" height="112.48" fill="#fb8000"/>
<rect x="1247.71" y="428.06" width="3.5" height="328.96" fill="#ffd100"/>
<rect x="1247.71" y="416.00" width="3.5" height="12.06" fill="#00cca6"/>
<rect x="1247.71" y="415.70" width="3.5" height="0.9" fill="#2d8ff5"/>
<rect x="1252.52" y="756.78" width="3.5" height="112.72" fill="#fb8000"/>
<rect x="1252.52" y="426.57" width="3.5" height="330.21" fill="#ffd100"/>
<rect x="1252.52" y="414.50" width="3.5" height="12.07" fill="#00cca6"/>
<rect x="1252.52" y="414.20" width="3.5" height="0.9" fill="#2d8ff5"/>
<rect x="1257.34" y="756.54" width="3.5" height="112.96" fill="#fb8000"/>
<rect x="1257.34" y="424.99" width="3.5" height="331.55" fill="#ffd100"/>
<rect x="1257.34" y="412.90" width="3.5" height="12.09" fill="#00cca6"/>
<rect x="1257.34" y="412.60" width="3.5" height="0.9" fill="#2d8ff5"/>
<rect x="1262.15" y="756.30" width="3.5" height="113.20" fill="#fb8000"/>
<rect x="1262.15" y="425.00" width="3.5" height="331.30" fill="#ffd100"/>
<rect x="1262.15" y="412.90" width="3.5" height="12.10" fill="#00cca6"/>
<rect x="1262.15" y="412.60" width="3.5" height="0.9" fill="#2d8ff5"/>
<rect x="1266.96" y="756.53" width="3.5" height="112.97" fill="#fb8000"/>
<rect x="1266.96" y="425.01" width="3.5" height="331.52" fill="#ffd100"/>
<rect x="1266.96" y="412.90" width="3.5" height="12.11" fill="#00cca6"/>
<rect x="1266.96" y="412.60" width="3.5" height="0.9" fill="#2d8ff5"/>
<rect x="1271.77" y="756.77" width="3.5" height="112.73" fill="#fb8000"/>
<rect x="1271.77" y="428.12" width="3.5" height="328.64" fill="#ffd100"/>
<rect x="1271.77" y="416.00" width="3.5" height="12.12" fill="#00cca6"/>
<rect x="1271.77" y="415.70" width="3.5" height="0.9" fill="#2d8ff5"/>
<rect x="1276.58" y="757.00" width="3.5" height="112.50" fill="#fb8000"/>
<rect x="1276.58" y="427.53" width="3.5" height="329.47" fill="#ffd100"/>
<rect x="1276.58" y="415.40" width="3.5" height="12.13" fill="#00cca6"/>
<rect x="1276.58" y="415.10" width="3.5" height="0.9" fill="#2d8ff5"/>
<rect x="1281.40" y="757.65" width="3.5" height="111.85" fill="#fb8000"/>
<rect x="1281.40" y="427.25" width="3.5" height="330.40" fill="#ffd100"/>
<rect x="1281.40" y="415.10" width="3.5" height="12.15" fill="#00cca6"/>
<rect x="1281.40" y="414.80" width="3.5" height="0.9" fill="#2d8ff5"/>
<rect x="1286.21" y="758.30" width="3.5" height="111.20" fill="#fb8000"/>
<rect x="1286.21" y="428.86" width="3.5" height="329.44" fill="#ffd100"/>
<rect x="1286.21" y="416.70" width="3.5" height="12.16" fill="#00cca6"/>
<rect x="1286.21" y="416.40" width="3.5" height="0.9" fill="#2d8ff5"/>
<rect x="1291.02" y="758.24" width="3.5" height="111.26" fill="#fb8000"/>
<rect x="1291.02" y="428.97" width="3.5" height="329.27" fill="#ffd100"/>
<rect x="1291.02" y="416.80" width="3.5" height="12.17" fill="#00cca6"/>
<rect x="1291.02" y="416.50" width="3.5" height="0.9" fill="#2d8ff5"/>
<rect x="1295.83" y="758.18" width="3.5" height="111.32" fill="#fb8000"/>
<rect x="1295.83" y="428.88" width="3.5" height="329.30" fill="#ffd100"/>
<rect x="1295.83" y="416.70" width="3.5" height="12.18" fill="#00cca6"/>
<rect x="1295.83" y="416.40" width="3.5" height="0.9" fill="#2d8ff5"/>
<rect x="1300.65" y="758.12" width="3.5" height="111.38" fill="#fb8000"/>
<rect x="1300.65" y="428.20" width="3.5" height="329.92" fill="#ffd100"/>
<rect x="1300.65" y="416.00" width="3.5" height="12.20" fill="#00cca6"/>
<rect x="1300.65" y="415.70" width="3.5" height="0.9" fill="#2d8ff5"/>
<rect x="1305.46" y="758.06" width="3.5" height="111.44" fill="#fb8000"/>
<rect x="1305.46" y="428.21" width="3.5" height="329.85" fill="#ffd100"/>
<rect x="1305.46" y="416.00" width="3.5" height="12.21" fill="#00cca6"/>
<rect x="1305.46" y="415.70" width="3.5" height="0.9" fill="#2d8ff5"/>
<rect x="1310.27" y="758.00" width="3.5" height="111.50" fill="#fb8000"/>
<rect x="1310.27" y="428.22" width="3.5" height="329.78" fill="#ffd100"/>
<rect x="1310.27" y="416.00" width="3.5" height="12.22" fill="#00cca6"/>
<rect x="1310.27" y="415.70" width="3.5" height="0.9" fill="#2d8ff5"/>
<rect x="1315.08" y="758.00" width="3.5" height="111.50" fill="#fb8000"/>
<rect x="1315.08" y="428.23" width="3.5" height="329.77" fill="#ffd100"/>
<rect x="1315.08" y="416.00" width="3.5" height="12.23" fill="#00cca6"/>
<rect x="1315.08" y="415.70" width="3.5" height="0.9" fill="#2d8ff5"/>
<rect x="1319.89" y="758.00" width="3.5" height="111.50" fill="#fb8000"/>
<rect x="1319.89" y="428.24" width="3.5" height="329.76" fill="#ffd100"/>
<rect x="1319.89" y="416.00" width="3.5" height="12.24" fill="#00cca6"/>
<rect x="1319.89" y="415.70" width="3.5" height="0.9" fill="#2d8ff5"/>
<rect x="1324.71" y="758.00" width="3.5" height="111.50" fill="#fb8000"/>
<rect x="1324.71" y="428.06" width="3.5" height="329.94" fill="#ffd100"/>
<rect x="1324.71" y="415.80" width="3.5" height="12.26" fill="#00cca6"/>
<rect x="1324.71" y="415.50" width="3.5" height="0.9" fill="#2d8ff5"/>
<rect x="1329.52" y="758.00" width="3.5" height="111.50" fill="#fb8000"/>
<rect x="1329.52" y="428.27" width="3.5" height="329.73" fill="#ffd100"/>
<rect x="1329.52" y="416.00" width="3.5" height="12.27" fill="#00cca6"/>
<rect x="1329.52" y="415.70" width="3.5" height="0.9" fill="#2d8ff5"/>
<rect x="1334.33" y="758.00" width="3.5" height="111.50" fill="#fb8000"/>
<rect x="1334.33" y="428.28" width="3.5" height="329.72" fill="#ffd100"/>
<rect x="1334.33" y="416.00" width="3.5" height="12.28" fill="#00cca6"/>
<rect x="1334.33" y="415.70" width="3.5" height="0.9" fill="#2d8ff5"/>
<rect x="1339.14" y="758.06" width="3.5" height="111.44" fill="#fb8000"/>
<rect x="1339.14" y="428.39" width="3.5" height="329.67" fill="#ffd100"/>
<rect x="1339.14" y="416.10" width="3.5" height="12.29" fill="#00cca6"/>
<rect x="1339.14" y="415.80" width="3.5" height="0.9" fill="#2d8ff5"/>
<rect x="1343.96" y="758.12" width="3.5" height="111.38" fill="#fb8000"/>
<rect x="1343.96" y="429.01" width="3.5" height="329.11" fill="#ffd100"/>
<rect x="1343.96" y="416.70" width="3.5" height="12.31" fill="#00cca6"/>
<rect x="1343.96" y="416.40" width="3.5" height="0.9" fill="#2d8ff5"/>
<rect x="1348.77" y="758.18" width="3.5" height="111.32" fill="#fb8000"/>
<rect x="1348.77" y="430.02" width="3.5" height="328.16" fill="#ffd100"/>
<rect x="1348.77" y="417.70" width="3.5" height="12.32" fill="#00cca6"/>
<rect x="1348.77" y="417.40" width="3.5" height="0.9" fill="#2d8ff5"/>
<rect x="1353.58" y="758.24" width="3.5" height="111.26" fill="#fb8000"/>
<rect x="1353.58" y="429.03" width="3.5" height="329.21" fill="#ffd100"/>
<rect x="1353.58" y="416.70" width="3.5" height="12.33" fill="#00cca6"/>
<rect x="1353.58" y="416.40" width="3.5" height="0.9" fill="#2d8ff5"/>
<rect x="1358.39" y="758.30" width="3.5" height="111.20" fill="#fb8000"/>
<rect x="1358.39" y="428.64" width="3.5" height="329.66" fill="#ffd100"/>
<rect x="1358.39" y="416.30" width="3.5" height="12.34" fill="#00cca6"/>
<rect x="1358.39" y="416.00" width="3.5" height="0.9" fill="#2d8ff5"/>
<rect x="1363.20" y="758.04" width="3.5" height="111.46" fill="#fb8000"/>
<rect x="1363.20" y="428.65" width="3.5" height="329.39" fill="#ffd100"/>
<rect x="1363.20" y="416.30" width="3.5" height="12.35" fill="#00cca6"/>
<rect x="1363.20" y="416.00" width="3.5" height="0.9" fill="#2d8ff5"/>
<rect x="1368.02" y="757.78" width="3.5" height="111.72" fill="#fb8000"/>
<rect x="1368.02" y="428.67" width="3.5" height="329.11" fill="#ffd100"/>
<rect x="1368.02" y="416.30" width="3.5" height="12.37" fill="#00cca6"/>
<rect x="1368.02" y="416.00" width="3.5" height="0.9" fill="#2d8ff5"/>
<rect x="1372.83" y="757.52" width="3.5" height="111.98" fill="#fb8000"/>
<rect x="1372.83" y="427.28" width="3.5" height="330.24" fill="#ffd100"/>
<rect x="1372.83" y="414.90" width="3.5" height="12.38" fill="#00cca6"/>
<rect x="1372.83" y="414.60" width="3.5" height="0.9" fill="#2d8ff5"/>
<rect x="1377.64" y="757.26" width="3.5" height="112.24" fill="#fb8000"/>
<rect x="1377.64" y="425.29" width="3.5" height="331.97" fill="#ffd100"/>
<rect x="1377.64" y="412.90" width="3.5" height="12.39" fill="#00cca6"/>
<rect x="1377.64" y="412.60" width="3.5" height="0.9" fill="#2d8ff5"/>
<rect x="1382.45" y="757.00" width="3.5" height="112.50" fill="#fb8000"/>
<rect x="1382.45" y="424.80" width="3.5" height="332.20" fill="#ffd100"/>
<rect x="1382.45" y="412.40" width="3.5" height="12.40" fill="#00cca6"/>
<rect x="1382.45" y="412.10" width="3.5" height="0.9" fill="#2d8ff5"/>
<rect x="1387.26" y="757.23" width="3.5" height="112.27" fill="#fb8000"/>
<rect x="1387.26" y="423.91" width="3.5" height="333.32" fill="#ffd100"/>
<rect x="1387.26" y="411.50" width="3.5" height="12.41" fill="#00cca6"/>
<rect x="1387.26" y="411.20" width="3.5" height="0.9" fill="#2d8ff5"/>
<rect x="1392.08" y="757.47" width="3.5" height="112.03" fill="#fb8000"/>
<rect x="1392.08" y="422.83" width="3.5" height="334.64" fill="#ffd100"/>
<rect x="1392.08" y="410.40" width="3.5" height="12.43" fill="#00cca6"/>
<rect x="1392.08" y="410.10" width="3.5" height="0.9" fill="#2d8ff5"/>
<rect x="1396.89" y="757.70" width="3.5" height="111.80" fill="#fb8000"/>
<rect x="1396.89" y="426.24" width="3.5" height="331.46" fill="#ffd100"/>
<rect x="1396.89" y="413.80" width="3.5" height="12.44" fill="#00cca6"/>
<rect x="1396.89" y="413.50" width="3.5" height="0.9" fill="#2d8ff5"/>
<rect x="1401.70" y="755.30" width="3.5" height="114.20" fill="#fb8000"/>
<rect x="1401.70" y="423.75" width="3.5" height="331.55" fill="#ffd100"/>
<rect x="1401.70" y="411.30" width="3.5" height="12.45" fill="#00cca6"/>
<rect x="1401.70" y="411.00" width="3.5" height="0.9" fill="#2d8ff5"/>
<rect x="1406.51" y="755.47" width="3.5" height="114.03" fill="#fb8000"/>
<rect x="1406.51" y="423.56" width="3.5" height="331.91" fill="#ffd100"/>
<rect x="1406.51" y="411.10" width="3.5" height="12.46" fill="#00cca6"/>
<rect x="1406.51" y="410.80" width="3.5" height="0.9" fill="#2d8ff5"/>
<rect x="1411.33" y="755.65" width="3.5" height="113.85" fill="#fb8000"/>
<rect x="1411.33" y="422.68" width="3.5" height="332.97" fill="#ffd100"/>
<rect x="1411.33" y="410.20" width="3.5" height="12.48" fill="#00cca6"/>
<rect x="1411.33" y="409.90" width="3.5" height="0.9" fill="#2d8ff5"/>
<rect x="1416.14" y="755.83" width="3.5" height="113.67" fill="#fb8000"/>
<rect x="1416.14" y="421.69" width="3.5" height="334.14" fill="#ffd100"/>
<rect x="1416.14" y="409.20" width="3.5" height="12.49" fill="#00cca6"/>
<rect x="1416.14" y="408.90" width="3.5" height="0.9" fill="#2d8ff5"/>
<rect x="1420.95" y="756.00" width="3.5" height="113.50" fill="#fb8000"/>
<rect x="1420.95" y="420.80" width="3.5" height="335.20" fill="#ffd100"/>
<rect x="1420.95" y="408.30" width="3.5" height="12.50" fill="#00cca6"/>
<rect x="1420.95" y="408.00" width="3.5" height="0.9" fill="#2d8ff5"/>
<line x1="368.25" y1="869.5" x2="368.25" y2="874" stroke="#5a5d63" stroke-width="1"/>
<line x1="464.5" y1="869.5" x2="464.5" y2="874" stroke="#5a5d63" stroke-width="1"/>
<line x1="560.75" y1="869.5" x2="560.75" y2="874" stroke="#5a5d63" stroke-width="1"/>
<line x1="657" y1="869.5" x2="657" y2="874" stroke="#5a5d63" stroke-width="1"/>
<line x1="753.25" y1="869.5" x2="753.25" y2="874" stroke="#5a5d63" stroke-width="1"/>
<line x1="849.5" y1="869.5" x2="849.5" y2="874" stroke="#5a5d63" stroke-width="1"/>
<line x1="945.75" y1="869.5" x2="945.75" y2="874" stroke="#5a5d63" stroke-width="1"/>
<line x1="1042" y1="869.5" x2="1042" y2="874" stroke="#5a5d63" stroke-width="1"/>
<line x1="1138.25" y1="869.5" x2="1138.25" y2="874" stroke="#5a5d63" stroke-width="1"/>
<line x1="1234.5" y1="869.5" x2="1234.5" y2="874" stroke="#5a5d63" stroke-width="1"/>
<line x1="1330.75" y1="869.5" x2="1330.75" y2="874" stroke="#5a5d63" stroke-width="1"/>
<line x1="1124.2" y1="129" x2="1124.2" y2="869.5" stroke="#d8d8d8" stroke-opacity="0.75" stroke-width="1"/>
<polyline points="1128,198.5 1134.5,159" fill="none" stroke="#8a8d93" stroke-width="1"/>
<polyline points="1128,211.5 1134.5,244" fill="none" stroke="#8a8d93" stroke-width="1"/>
<polyline points="1128,869 1134.5,847" fill="none" stroke="#8a8d93" stroke-width="1"/>
<path d="M1128 202.5 L1134.5 198 L1134.5 207 Z" fill="rgba(146,149,156,0.92)"/>
<path d="M1128 631 L1134.5 626.5 L1134.5 635.5 Z" fill="rgba(146,149,156,0.92)"/>
</svg>
<div class="xl" style="left:328.25px">30</div>
<div class="xl" style="left:424.5px">20 окт.</div>
<div class="xl" style="left:520.75px">8 нояб.</div>
<div class="xl" style="left:617px">28</div>
<div class="xl" style="left:713.25px">18 дек.</div>
<div class="xl" style="left:809.5px">7 янв.</div>
<div class="xl" style="left:905.75px">27</div>
<div class="xl" style="left:1002px">16 февр.</div>
<div class="xl" style="left:1098.25px">8 мар.</div>
<div class="xl" style="left:1194.5px">28</div>
<div class="xl" style="left:1290.75px">18 апр.</div>
<div class="tt" style="left:1134px;top:145.5px;width:162px;height:35.5px">
<span class="dot" style="background:#2d8ff5"></span><div class="l1">6 мар.: 1 166</div><div class="l2">Очень высокая: 85 - 100</div></div>
<div class="tt" style="left:1134px;top:185px;width:123.5px;height:35px">
<span class="dot" style="background:#00cca6"></span><div class="l1">6 мар.: 18 054</div><div class="l2">Высокая: 60 - 84</div></div>
<div class="tt" style="left:1134px;top:224px;width:123.5px;height:35.5px">
<span class="dot" style="background:#ffd100"></span><div class="l1">6 мар.: 624 331</div><div class="l2">Средняя: 20 - 59</div></div>
<div class="tt" style="left:1134px;top:613.5px;width:117.5px;height:35px">
<span class="dot" style="background:#fb8000"></span><div class="l1">6 мар.: 354 080</div><div class="l2">Низкая: 10 - 19</div></div>
<div class="tt" style="left:1134px;top:833px;width:136px;height:35px">
<span class="dot" style="background:#dc3b35"></span><div class="l1">6 мар.: 0</div><div class="l2">Очень низкая: 6 - 9</div></div>
</body>
</html>
